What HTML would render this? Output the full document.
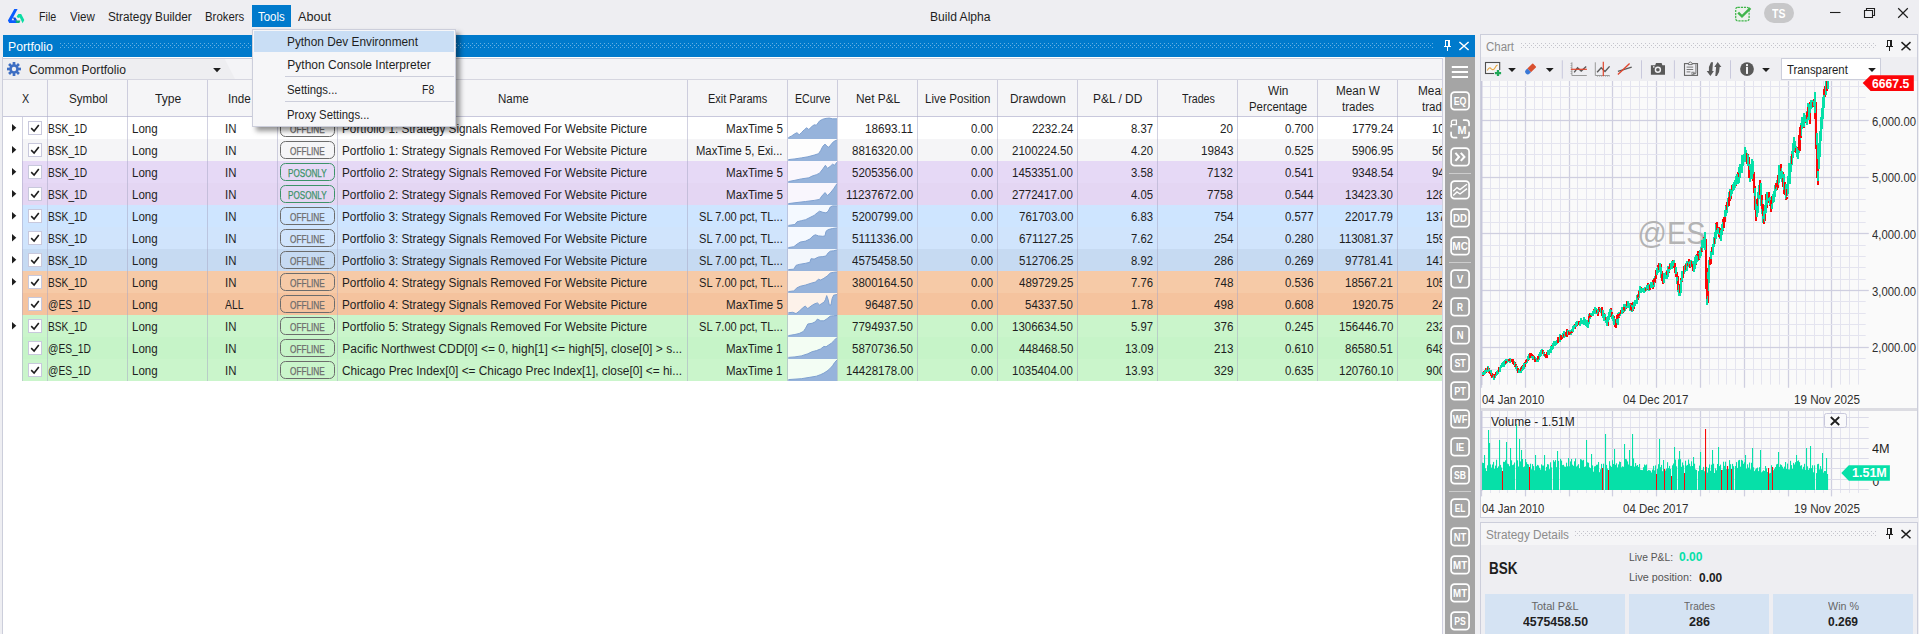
<!DOCTYPE html><html><head><meta charset="utf-8"><title>Build Alpha</title><style>*{box-sizing:border-box;margin:0;padding:0}
html,body{width:1919px;height:634px;overflow:hidden}
body{background:#EEEEF2;font-family:"Liberation Sans",sans-serif;font-size:12px;color:#1E1E1E;position:relative}
.a{position:absolute}
.t{position:absolute;white-space:nowrap;line-height:14px;height:14px;transform-origin:0 50%}
.c{text-align:center}
.r{text-align:right}
.menu{position:absolute;top:10px;height:14px;line-height:14px;white-space:nowrap}
.hdr{position:absolute;white-space:nowrap;line-height:16px;text-align:center;color:#1E1E1E}
.row{position:absolute;left:22px;width:1421px;height:22px;overflow:hidden}
.cell{position:absolute;top:5px;height:14px;line-height:14px;white-space:nowrap;overflow:hidden}
.num{letter-spacing:-0.25px}
.nm{letter-spacing:-0.1px}
.vsep{position:absolute;width:1px;background:rgba(165,165,195,0.5)}
.badge{position:absolute;width:55px;height:17.4px;border:1.2px solid #6A6A6A;border-radius:5.5px}

.cb{position:absolute;width:14px;height:14px;background:#fff;border:1px solid #C8C8DC}
</style></head><body>
<svg class="a" style="left:0;top:0" width="34" height="34" viewBox="0 0 34 34">
<path d="M14.3 9 L17.6 9 L11.6 20.3 L16.4 20.3 L17.6 23 L9.2 23 L7.9 20.6 Z" fill="#0A5CFF"/>
<path d="M12.8 17.4 L15.4 17.4 L17.2 20.6 L14.4 20.6 Z" fill="#0B4CD8"/>
<path d="M16.6 16.4 L18.4 13.9 L21.2 13.9 L24.3 20 L22.6 23.2 L19.8 17.4 L18 17.9 Z" fill="#0BDCA4"/>
<path d="M15.2 20.4 L20.4 20.4 L19.4 23 L16.4 23 Z" fill="#0BAE7C"/>
</svg>
<div class="a" style="left:252px;top:5px;width:39px;height:22px;background:#007ACC"></div>
<div class="t" style="left:39.40px;top:10px;transform:scaleX(0.8892);">File</div>
<div class="t" style="left:70.00px;top:10px;transform:scaleX(0.9652);">View</div>
<div class="t" style="left:108.30px;top:10px;transform:scaleX(0.9802);">Strategy Builder</div>
<div class="t" style="left:205.00px;top:10px;transform:scaleX(0.9506);">Brokers</div>
<div class="t" style="left:258.20px;top:10px;color:#fff;transform:scaleX(0.9530);">Tools</div>
<div class="t" style="left:297.70px;top:10px;transform:scaleX(1.0523);">About</div>
<div class="t" style="left:929.75px;top:10px;transform:scaleX(1.0075);">Build Alpha</div>
<svg class="a" style="left:1730px;top:2px" width="26" height="24" viewBox="0 0 26 24">
<rect x="5.7" y="5.4" width="13.4" height="13.4" rx="2" fill="#ECF1EC" stroke="#3FB54A" stroke-width="1.2" stroke-dasharray="2.2 0.9"/>
<path d="M8.2 10.6 L12 14.4 L20.4 6.2" fill="none" stroke="#3FB54A" stroke-width="2.4"/>
</svg>
<div class="a" style="left:1764px;top:3px;width:30px;height:20px;border-radius:10px;background:#C7C7C9"></div>
<div class="t" style="left:1772.00px;top:5.8px;font-size:13.5px;font-weight:bold;color:#fff;transform:scaleX(0.7761);line-height:16px;height:16px;">TS</div>
<svg class="a" style="left:1820px;top:0" width="99" height="30" viewBox="0 0 99 30">
<path d="M10 12.5 H20.5" stroke="#1E1E1E" stroke-width="1.1" fill="none"/>
<path d="M44.5 10.5 H52.5 V17.5 H44.5 Z M46.5 10.5 V8.5 H54.5 V15.5 H52.5" stroke="#1E1E1E" stroke-width="1.1" fill="none"/>
<path d="M78.2 8.3 L87.8 17.7 M87.8 8.3 L78.2 17.7" stroke="#1E1E1E" stroke-width="1.2" fill="none"/>
</svg>
<div class="a" style="left:2px;top:57px;width:1441px;height:577px;background:#fff;border-left:1px solid #CCCEDB"></div>
<div class="a" style="left:3px;top:35px;width:1472px;height:22px;background:#007ACC"></div>
<div class="t" style="left:7.70px;top:40px;color:#fff;transform:scaleX(1.0175);">Portfolio</div>
<svg class="a" style="left:60px;top:43px" width="1374" height="5"><defs><pattern id="dp" width="4" height="4" patternUnits="userSpaceOnUse"><rect x="0" y="0" width="1" height="1" fill="#68B1E3"/><rect x="2" y="2" width="1" height="1" fill="#68B1E3"/></pattern></defs><rect width="1374" height="5" fill="url(#dp)"/></svg>
<svg class="a" style="left:1440px;top:37px" width="34" height="18" viewBox="0 0 34 18">
<path d="M5 3.5 H10 M5.5 3 V9.5 M4 9.5 H11 M7.5 10 V14" stroke="#fff" stroke-width="1" fill="none"/><rect x="8" y="3" width="2" height="6.5" fill="#fff"/>
<path d="M19.4 5 L28.6 13 M28.6 5 L19.4 13" stroke="#fff" stroke-width="1.5" fill="none"/></svg>
<div class="a" style="left:3px;top:58px;width:1439px;height:22px;background:#F4F4F7;border-top:1px solid #CCCEDB"></div>
<svg class="a" style="left:3px;top:59px" width="240" height="21"><path d="M0 0 H221.7 L232 20 H0Z" fill="#EEEEF1"/></svg>
<svg class="a" style="left:6px;top:61px" width="16" height="16" viewBox="-8 -8 16 16"><g fill="#3F6FC3"><circle r="4.7"/><rect x="-1.35" y="-7" width="2.7" height="4" transform="rotate(0)"/><rect x="-1.35" y="-7" width="2.7" height="4" transform="rotate(45)"/><rect x="-1.35" y="-7" width="2.7" height="4" transform="rotate(90)"/><rect x="-1.35" y="-7" width="2.7" height="4" transform="rotate(135)"/><rect x="-1.35" y="-7" width="2.7" height="4" transform="rotate(180)"/><rect x="-1.35" y="-7" width="2.7" height="4" transform="rotate(225)"/><rect x="-1.35" y="-7" width="2.7" height="4" transform="rotate(270)"/><rect x="-1.35" y="-7" width="2.7" height="4" transform="rotate(315)"/></g><circle r="2.2" fill="#EEEEF1"/></svg>
<div class="t" style="left:29.30px;top:63px;transform:scaleX(1.0099);">Common Portfolio</div>
<svg class="a" style="left:212px;top:67px" width="10" height="6"><path d="M1.1 1 H8.9 L5 5.2Z" fill="#1E1E1E"/></svg>
<div class="a" style="left:3px;top:79px;width:1439px;height:38px;background:#F5F5F7;border-top:1px solid #D6D6E0;border-bottom:1px solid #C8C8DC"></div>
<div class="a" style="left:3px;top:80px;width:1439px;height:36px;overflow:hidden">
<div class="t" style="left:18.90px;top:11.5px;transform:scaleX(0.8982);">X</div>
<div class="t" style="left:65.65px;top:11.5px;transform:scaleX(0.9671);">Symbol</div>
<div class="t" style="left:151.85px;top:11.5px;transform:scaleX(1.0109);">Type</div>
<div class="t" style="left:225.20px;top:11.5px;transform:scaleX(0.9718);">Inde</div>
<div class="t" style="left:494.60px;top:11.5px;transform:scaleX(0.9620);">Name</div>
<div class="t" style="left:705.40px;top:11.5px;transform:scaleX(0.9152);">Exit Params</div>
<div class="t" style="left:792.25px;top:11.5px;transform:scaleX(0.8872);">ECurve</div>
<div class="t" style="left:852.90px;top:11.5px;transform:scaleX(0.9887);">Net P&amp;L</div>
<div class="t" style="left:922.30px;top:11.5px;transform:scaleX(0.9611);">Live Position</div>
<div class="t" style="left:1007.05px;top:11.5px;transform:scaleX(0.9858);">Drawdown</div>
<div class="t" style="left:1090.35px;top:11.5px;transform:scaleX(0.9944);">P&amp;L / DD</div>
<div class="t" style="left:1178.55px;top:11.5px;transform:scaleX(0.8914);">Trades</div>
<div class="t" style="left:1264.80px;top:3.5px;transform:scaleX(0.9868);">Win</div>
<div class="t" style="left:1245.90px;top:20px;transform:scaleX(0.9480);">Percentage</div>
<div class="t" style="left:1333.10px;top:3.5px;transform:scaleX(0.9801);">Mean W</div>
<div class="t" style="left:1338.95px;top:20px;transform:scaleX(0.9622);">trades</div>
<div class="t" style="left:1415.25px;top:3.5px;transform:scaleX(0.9867);">Mean L</div>
<div class="t" style="left:1418.95px;top:20px;transform:scaleX(0.9622);">trades</div>
</div>
<div class="a" style="left:22px;top:117px;width:1420px;height:22px;background:#FFFFFF"></div>
<div class="cb" style="left:28px;top:121px"><svg width="12" height="12" viewBox="0 0 12 12" style="display:block"><path d="M2.2 6.2 L5.1 9 L9.8 3" fill="none" stroke="#1E1E1E" stroke-width="1.6"/></svg></div>
<div class="t" style="left:48.30px;top:122px;transform:scaleX(0.8494);">BSK_1D</div>
<div class="t" style="left:132.30px;top:122px;transform:scaleX(0.9624);">Long</div>
<div class="t" style="left:225.30px;top:122px;transform:scaleX(0.9500);">IN</div>
<div class="badge" style="left:280px;top:119.2px;border-color:#6C6C6C"></div>
<div class="t" style="left:290.20px;top:123.5px;font-size:10px;color:#6C6C6C;transform:scaleX(0.8240);line-height:12px;height:12px;-webkit-text-stroke:0.25px #6C6C6C;">OFFLINE</div>
<div class="t" style="left:342.30px;top:122px;transform:scaleX(0.9799);">Portfolio 1: Strategy Signals Removed For Website Picture</div>
<div class="t" style="left:725.50px;top:122px;transform:scaleX(0.9676);">MaxTime 5</div>
<svg class="a" style="left:788px;top:117px" width="49" height="22"><rect width="49" height="22" fill="#fff" fill-opacity="0.78"/><path d="M0.4 20.6 L3.7 18.9 L6.9 16.7 L9.0 15.7 L11.2 17.8 L13.3 15.7 L16.5 12.5 L18.7 10.8 L20.8 12.5 L24.1 9.3 L26.2 7.8 L28.4 8.2 L31.6 3.9 L34.8 2.2 L38.0 1.4 L41.3 1.1 L44.5 1.8 L49.0 1.8 L49 22 L0 22Z" fill="#96B3DB"/><path d="M0.4 20.6 L3.7 18.9 L6.9 16.7 L9.0 15.7 L11.2 17.8 L13.3 15.7 L16.5 12.5 L18.7 10.8 L20.8 12.5 L24.1 9.3 L26.2 7.8 L28.4 8.2 L31.6 3.9 L34.8 2.2 L38.0 1.4 L41.3 1.1 L44.5 1.8 L49.0 1.8" fill="none" stroke="#7FA1D0" stroke-width="1"/></svg>
<div class="t" style="left:865.11px;top:122px;transform:scaleX(0.9739);">18693.11</div>
<div class="t" style="left:970.99px;top:122px;transform:scaleX(0.9422);">0.00</div>
<div class="t" style="left:1031.58px;top:122px;transform:scaleX(0.9546);">2232.24</div>
<div class="t" style="left:1130.99px;top:122px;transform:scaleX(0.9422);">8.37</div>
<div class="t" style="left:1220.06px;top:122px;transform:scaleX(0.9686);">20</div>
<div class="t" style="left:1284.52px;top:122px;transform:scaleX(0.9483);">0.700</div>
<div class="t" style="left:1351.58px;top:122px;transform:scaleX(0.9546);">1779.24</div>
<div class="a" style="left:1398px;top:117px;width:44px;height:22px;overflow:hidden"><div class="t" style="left:34.18px;top:5px;transform:scaleX(0.9546);">1062.18</div></div>
<svg class="a" style="left:11.8px;top:124.2px" width="5" height="8"><path d="M0 0 L4.3 3.8 L0 7.6Z" fill="#1E1E1E"/></svg>
<div class="a" style="left:22px;top:139px;width:1420px;height:22px;background:#F5F5F7"></div>
<div class="cb" style="left:28px;top:143px"><svg width="12" height="12" viewBox="0 0 12 12" style="display:block"><path d="M2.2 6.2 L5.1 9 L9.8 3" fill="none" stroke="#1E1E1E" stroke-width="1.6"/></svg></div>
<div class="t" style="left:48.30px;top:144px;transform:scaleX(0.8494);">BSK_1D</div>
<div class="t" style="left:132.30px;top:144px;transform:scaleX(0.9624);">Long</div>
<div class="t" style="left:225.30px;top:144px;transform:scaleX(0.9500);">IN</div>
<div class="badge" style="left:280px;top:141.2px;border-color:#6C6C6C"></div>
<div class="t" style="left:290.20px;top:145.5px;font-size:10px;color:#6C6C6C;transform:scaleX(0.8240);line-height:12px;height:12px;-webkit-text-stroke:0.25px #6C6C6C;">OFFLINE</div>
<div class="t" style="left:342.30px;top:144px;transform:scaleX(0.9799);">Portfolio 1: Strategy Signals Removed For Website Picture</div>
<div class="t" style="left:696.00px;top:144px;transform:scaleX(0.9377);">MaxTime 5, Exi...</div>
<svg class="a" style="left:788px;top:139px" width="49" height="22"><rect width="49" height="22" fill="#fff" fill-opacity="0.78"/><path d="M0.4 20.6 L6.9 19.9 L13.3 18.9 L19.8 17.8 L26.2 16.1 L30.5 14.7 L32.7 11.5 L34.8 7.3 L37.0 5.1 L39.1 7.3 L40.8 8.3 L43.4 5.1 L45.6 2.6 L49.0 0.9 L49 22 L0 22Z" fill="#96B3DB"/><path d="M0.4 20.6 L6.9 19.9 L13.3 18.9 L19.8 17.8 L26.2 16.1 L30.5 14.7 L32.7 11.5 L34.8 7.3 L37.0 5.1 L39.1 7.3 L40.8 8.3 L43.4 5.1 L45.6 2.6 L49.0 0.9" fill="none" stroke="#7FA1D0" stroke-width="1"/></svg>
<div class="t" style="left:852.17px;top:144px;transform:scaleX(0.9594);">8816320.00</div>
<div class="t" style="left:970.99px;top:144px;transform:scaleX(0.9422);">0.00</div>
<div class="t" style="left:1012.17px;top:144px;transform:scaleX(0.9594);">2100224.50</div>
<div class="t" style="left:1130.99px;top:144px;transform:scaleX(0.9422);">4.20</div>
<div class="t" style="left:1200.65px;top:144px;transform:scaleX(0.9693);">19843</div>
<div class="t" style="left:1284.52px;top:144px;transform:scaleX(0.9483);">0.525</div>
<div class="t" style="left:1351.58px;top:144px;transform:scaleX(0.9546);">5906.95</div>
<div class="a" style="left:1398px;top:139px;width:44px;height:22px;overflow:hidden"><div class="t" style="left:34.18px;top:5px;transform:scaleX(0.9546);">5612.44</div></div>
<svg class="a" style="left:11.8px;top:146.2px" width="5" height="8"><path d="M0 0 L4.3 3.8 L0 7.6Z" fill="#1E1E1E"/></svg>
<div class="a" style="left:22px;top:161px;width:1420px;height:22px;background:#E6D9F6"></div>
<div class="cb" style="left:28px;top:165px"><svg width="12" height="12" viewBox="0 0 12 12" style="display:block"><path d="M2.2 6.2 L5.1 9 L9.8 3" fill="none" stroke="#1E1E1E" stroke-width="1.6"/></svg></div>
<div class="t" style="left:48.30px;top:166px;transform:scaleX(0.8494);">BSK_1D</div>
<div class="t" style="left:132.30px;top:166px;transform:scaleX(0.9624);">Long</div>
<div class="t" style="left:225.30px;top:166px;transform:scaleX(0.9500);">IN</div>
<div class="badge" style="left:280px;top:163.2px;border-color:#3D9369"></div>
<div class="t" style="left:288.25px;top:167.5px;font-size:10px;color:#3D9369;transform:scaleX(0.8129);line-height:12px;height:12px;-webkit-text-stroke:0.25px #3D9369;">POSONLY</div>
<div class="t" style="left:342.30px;top:166px;transform:scaleX(0.9799);">Portfolio 2: Strategy Signals Removed For Website Picture</div>
<div class="t" style="left:725.50px;top:166px;transform:scaleX(0.9676);">MaxTime 5</div>
<svg class="a" style="left:788px;top:161px" width="49" height="22"><rect width="49" height="22" fill="#fff" fill-opacity="0.78"/><path d="M0.4 20.6 L6.9 19.3 L13.3 17.9 L20.8 16.8 L24.1 15.1 L28.4 13.7 L31.6 12.2 L34.8 8.0 L37.4 4.3 L39.5 7.4 L42.3 5.3 L44.5 3.2 L46.6 4.3 L49.0 1.1 L49 22 L0 22Z" fill="#96B3DB"/><path d="M0.4 20.6 L6.9 19.3 L13.3 17.9 L20.8 16.8 L24.1 15.1 L28.4 13.7 L31.6 12.2 L34.8 8.0 L37.4 4.3 L39.5 7.4 L42.3 5.3 L44.5 3.2 L46.6 4.3 L49.0 1.1" fill="none" stroke="#7FA1D0" stroke-width="1"/></svg>
<div class="t" style="left:852.17px;top:166px;transform:scaleX(0.9594);">5205356.00</div>
<div class="t" style="left:970.99px;top:166px;transform:scaleX(0.9422);">0.00</div>
<div class="t" style="left:1012.17px;top:166px;transform:scaleX(0.9594);">1453351.00</div>
<div class="t" style="left:1130.99px;top:166px;transform:scaleX(0.9422);">3.58</div>
<div class="t" style="left:1207.12px;top:166px;transform:scaleX(0.9692);">7132</div>
<div class="t" style="left:1284.52px;top:166px;transform:scaleX(0.9483);">0.541</div>
<div class="t" style="left:1351.58px;top:166px;transform:scaleX(0.9546);">9348.54</div>
<div class="a" style="left:1398px;top:161px;width:44px;height:22px;overflow:hidden"><div class="t" style="left:34.18px;top:5px;transform:scaleX(0.9546);">9421.37</div></div>
<svg class="a" style="left:11.8px;top:168.2px" width="5" height="8"><path d="M0 0 L4.3 3.8 L0 7.6Z" fill="#1E1E1E"/></svg>
<div class="a" style="left:22px;top:183px;width:1420px;height:22px;background:#E4D6F3"></div>
<div class="cb" style="left:28px;top:187px"><svg width="12" height="12" viewBox="0 0 12 12" style="display:block"><path d="M2.2 6.2 L5.1 9 L9.8 3" fill="none" stroke="#1E1E1E" stroke-width="1.6"/></svg></div>
<div class="t" style="left:48.30px;top:188px;transform:scaleX(0.8494);">BSK_1D</div>
<div class="t" style="left:132.30px;top:188px;transform:scaleX(0.9624);">Long</div>
<div class="t" style="left:225.30px;top:188px;transform:scaleX(0.9500);">IN</div>
<div class="badge" style="left:280px;top:185.2px;border-color:#3D9369"></div>
<div class="t" style="left:288.25px;top:189.5px;font-size:10px;color:#3D9369;transform:scaleX(0.8129);line-height:12px;height:12px;-webkit-text-stroke:0.25px #3D9369;">POSONLY</div>
<div class="t" style="left:342.30px;top:188px;transform:scaleX(0.9799);">Portfolio 2: Strategy Signals Removed For Website Picture</div>
<div class="t" style="left:725.50px;top:188px;transform:scaleX(0.9676);">MaxTime 5</div>
<svg class="a" style="left:788px;top:183px" width="49" height="22"><rect width="49" height="22" fill="#fff" fill-opacity="0.78"/><path d="M0.4 20.6 L9.0 19.5 L17.6 18.5 L26.2 17.4 L31.6 16.4 L33.7 13.2 L37.0 9.6 L39.5 12.5 L42.3 10.0 L45.6 5.8 L47.7 2.6 L49.0 0.5 L49 22 L0 22Z" fill="#96B3DB"/><path d="M0.4 20.6 L9.0 19.5 L17.6 18.5 L26.2 17.4 L31.6 16.4 L33.7 13.2 L37.0 9.6 L39.5 12.5 L42.3 10.0 L45.6 5.8 L47.7 2.6 L49.0 0.5" fill="none" stroke="#7FA1D0" stroke-width="1"/></svg>
<div class="t" style="left:845.70px;top:188px;transform:scaleX(0.9727);">11237672.00</div>
<div class="t" style="left:970.99px;top:188px;transform:scaleX(0.9422);">0.00</div>
<div class="t" style="left:1012.17px;top:188px;transform:scaleX(0.9594);">2772417.00</div>
<div class="t" style="left:1130.99px;top:188px;transform:scaleX(0.9422);">4.05</div>
<div class="t" style="left:1207.12px;top:188px;transform:scaleX(0.9692);">7758</div>
<div class="t" style="left:1284.52px;top:188px;transform:scaleX(0.9483);">0.544</div>
<div class="t" style="left:1345.11px;top:188px;transform:scaleX(0.9566);">13423.30</div>
<div class="a" style="left:1398px;top:183px;width:44px;height:22px;overflow:hidden"><div class="t" style="left:27.71px;top:5px;transform:scaleX(0.9566);">12874.50</div></div>
<svg class="a" style="left:11.8px;top:190.2px" width="5" height="8"><path d="M0 0 L4.3 3.8 L0 7.6Z" fill="#1E1E1E"/></svg>
<div class="a" style="left:22px;top:205px;width:1420px;height:22px;background:#CEE5FF"></div>
<div class="cb" style="left:28px;top:209px"><svg width="12" height="12" viewBox="0 0 12 12" style="display:block"><path d="M2.2 6.2 L5.1 9 L9.8 3" fill="none" stroke="#1E1E1E" stroke-width="1.6"/></svg></div>
<div class="t" style="left:48.30px;top:210px;transform:scaleX(0.8494);">BSK_1D</div>
<div class="t" style="left:132.30px;top:210px;transform:scaleX(0.9624);">Long</div>
<div class="t" style="left:225.30px;top:210px;transform:scaleX(0.9500);">IN</div>
<div class="badge" style="left:280px;top:207.2px;border-color:#6C6C6C"></div>
<div class="t" style="left:290.20px;top:211.5px;font-size:10px;color:#6C6C6C;transform:scaleX(0.8240);line-height:12px;height:12px;-webkit-text-stroke:0.25px #6C6C6C;">OFFLINE</div>
<div class="t" style="left:342.30px;top:210px;transform:scaleX(0.9799);">Portfolio 3: Strategy Signals Removed For Website Picture</div>
<div class="t" style="left:698.75px;top:210px;transform:scaleX(0.9230);">SL 7.00 pct, TL...</div>
<svg class="a" style="left:788px;top:205px" width="49" height="22"><rect width="49" height="22" fill="#fff" fill-opacity="0.78"/><path d="M0.4 20.4 L6.9 19.5 L9.0 16.8 L13.3 15.7 L17.6 14.7 L21.9 12.5 L26.2 10.4 L29.4 7.7 L31.6 6.2 L34.8 7.3 L38.0 7.9 L40.2 6.2 L42.3 2.0 L44.5 0.9 L49.0 0.9 L49 22 L0 22Z" fill="#96B3DB"/><path d="M0.4 20.4 L6.9 19.5 L9.0 16.8 L13.3 15.7 L17.6 14.7 L21.9 12.5 L26.2 10.4 L29.4 7.7 L31.6 6.2 L34.8 7.3 L38.0 7.9 L40.2 6.2 L42.3 2.0 L44.5 0.9 L49.0 0.9" fill="none" stroke="#7FA1D0" stroke-width="1"/></svg>
<div class="t" style="left:852.17px;top:210px;transform:scaleX(0.9594);">5200799.00</div>
<div class="t" style="left:970.99px;top:210px;transform:scaleX(0.9422);">0.00</div>
<div class="t" style="left:1018.64px;top:210px;transform:scaleX(0.9581);">761703.00</div>
<div class="t" style="left:1130.99px;top:210px;transform:scaleX(0.9422);">6.83</div>
<div class="t" style="left:1213.59px;top:210px;transform:scaleX(0.9690);">754</div>
<div class="t" style="left:1284.52px;top:210px;transform:scaleX(0.9483);">0.577</div>
<div class="t" style="left:1345.11px;top:210px;transform:scaleX(0.9566);">22017.79</div>
<div class="a" style="left:1398px;top:205px;width:44px;height:22px;overflow:hidden"><div class="t" style="left:27.71px;top:5px;transform:scaleX(0.9566);">13790.12</div></div>
<svg class="a" style="left:11.8px;top:212.2px" width="5" height="8"><path d="M0 0 L4.3 3.8 L0 7.6Z" fill="#1E1E1E"/></svg>
<div class="a" style="left:22px;top:227px;width:1420px;height:22px;background:#D0E4FC"></div>
<div class="cb" style="left:28px;top:231px"><svg width="12" height="12" viewBox="0 0 12 12" style="display:block"><path d="M2.2 6.2 L5.1 9 L9.8 3" fill="none" stroke="#1E1E1E" stroke-width="1.6"/></svg></div>
<div class="t" style="left:48.30px;top:232px;transform:scaleX(0.8494);">BSK_1D</div>
<div class="t" style="left:132.30px;top:232px;transform:scaleX(0.9624);">Long</div>
<div class="t" style="left:225.30px;top:232px;transform:scaleX(0.9500);">IN</div>
<div class="badge" style="left:280px;top:229.2px;border-color:#6C6C6C"></div>
<div class="t" style="left:290.20px;top:233.5px;font-size:10px;color:#6C6C6C;transform:scaleX(0.8240);line-height:12px;height:12px;-webkit-text-stroke:0.25px #6C6C6C;">OFFLINE</div>
<div class="t" style="left:342.30px;top:232px;transform:scaleX(0.9799);">Portfolio 3: Strategy Signals Removed For Website Picture</div>
<div class="t" style="left:698.75px;top:232px;transform:scaleX(0.9230);">SL 7.00 pct, TL...</div>
<svg class="a" style="left:788px;top:227px" width="49" height="22"><rect width="49" height="22" fill="#fff" fill-opacity="0.78"/><path d="M0.4 20.6 L5.8 19.7 L9.0 17.2 L12.2 15.1 L17.6 14.1 L21.9 12.0 L25.1 8.9 L27.3 7.8 L30.5 8.9 L34.8 9.3 L37.0 8.9 L38.0 4.3 L40.2 2.6 L44.5 1.5 L49.0 0.9 L49 22 L0 22Z" fill="#96B3DB"/><path d="M0.4 20.6 L5.8 19.7 L9.0 17.2 L12.2 15.1 L17.6 14.1 L21.9 12.0 L25.1 8.9 L27.3 7.8 L30.5 8.9 L34.8 9.3 L37.0 8.9 L38.0 4.3 L40.2 2.6 L44.5 1.5 L49.0 0.9" fill="none" stroke="#7FA1D0" stroke-width="1"/></svg>
<div class="t" style="left:852.17px;top:232px;transform:scaleX(0.9871);">5111336.00</div>
<div class="t" style="left:970.99px;top:232px;transform:scaleX(0.9422);">0.00</div>
<div class="t" style="left:1018.64px;top:232px;transform:scaleX(0.9734);">671127.25</div>
<div class="t" style="left:1130.99px;top:232px;transform:scaleX(0.9422);">7.62</div>
<div class="t" style="left:1213.59px;top:232px;transform:scaleX(0.9690);">254</div>
<div class="t" style="left:1284.52px;top:232px;transform:scaleX(0.9483);">0.280</div>
<div class="t" style="left:1338.64px;top:232px;transform:scaleX(0.9734);">113081.37</div>
<div class="a" style="left:1398px;top:227px;width:44px;height:22px;overflow:hidden"><div class="t" style="left:27.71px;top:5px;transform:scaleX(0.9566);">15987.33</div></div>
<svg class="a" style="left:11.8px;top:234.2px" width="5" height="8"><path d="M0 0 L4.3 3.8 L0 7.6Z" fill="#1E1E1E"/></svg>
<div class="a" style="left:22px;top:249px;width:1420px;height:22px;background:#C6DAF2"></div>
<div class="cb" style="left:28px;top:253px"><svg width="12" height="12" viewBox="0 0 12 12" style="display:block"><path d="M2.2 6.2 L5.1 9 L9.8 3" fill="none" stroke="#1E1E1E" stroke-width="1.6"/></svg></div>
<div class="t" style="left:48.30px;top:254px;transform:scaleX(0.8494);">BSK_1D</div>
<div class="t" style="left:132.30px;top:254px;transform:scaleX(0.9624);">Long</div>
<div class="t" style="left:225.30px;top:254px;transform:scaleX(0.9500);">IN</div>
<div class="badge" style="left:280px;top:251.2px;border-color:#6C6C6C"></div>
<div class="t" style="left:290.20px;top:255.5px;font-size:10px;color:#6C6C6C;transform:scaleX(0.8240);line-height:12px;height:12px;-webkit-text-stroke:0.25px #6C6C6C;">OFFLINE</div>
<div class="t" style="left:342.30px;top:254px;transform:scaleX(0.9799);">Portfolio 3: Strategy Signals Removed For Website Picture</div>
<div class="t" style="left:698.75px;top:254px;transform:scaleX(0.9230);">SL 7.00 pct, TL...</div>
<svg class="a" style="left:788px;top:249px" width="49" height="22"><rect width="49" height="22" fill="#fff" fill-opacity="0.78"/><path d="M0.4 20.6 L5.8 20.2 L8.0 16.4 L11.2 15.4 L17.6 14.3 L21.9 13.3 L23.0 9.7 L26.2 10.1 L30.5 8.0 L34.8 7.6 L38.0 7.0 L40.2 3.8 L42.3 2.2 L45.6 1.8 L49.0 0.9 L49 22 L0 22Z" fill="#96B3DB"/><path d="M0.4 20.6 L5.8 20.2 L8.0 16.4 L11.2 15.4 L17.6 14.3 L21.9 13.3 L23.0 9.7 L26.2 10.1 L30.5 8.0 L34.8 7.6 L38.0 7.0 L40.2 3.8 L42.3 2.2 L45.6 1.8 L49.0 0.9" fill="none" stroke="#7FA1D0" stroke-width="1"/></svg>
<div class="t" style="left:852.17px;top:254px;transform:scaleX(0.9594);">4575458.50</div>
<div class="t" style="left:970.99px;top:254px;transform:scaleX(0.9422);">0.00</div>
<div class="t" style="left:1018.64px;top:254px;transform:scaleX(0.9581);">512706.25</div>
<div class="t" style="left:1130.99px;top:254px;transform:scaleX(0.9422);">8.92</div>
<div class="t" style="left:1213.59px;top:254px;transform:scaleX(0.9690);">286</div>
<div class="t" style="left:1284.52px;top:254px;transform:scaleX(0.9483);">0.269</div>
<div class="t" style="left:1345.11px;top:254px;transform:scaleX(0.9566);">97781.41</div>
<div class="a" style="left:1398px;top:249px;width:44px;height:22px;overflow:hidden"><div class="t" style="left:27.71px;top:5px;transform:scaleX(0.9566);">14120.80</div></div>
<svg class="a" style="left:11.8px;top:256.2px" width="5" height="8"><path d="M0 0 L4.3 3.8 L0 7.6Z" fill="#1E1E1E"/></svg>
<div class="a" style="left:22px;top:271px;width:1420px;height:22px;background:#F6CAA7"></div>
<div class="cb" style="left:28px;top:275px"><svg width="12" height="12" viewBox="0 0 12 12" style="display:block"><path d="M2.2 6.2 L5.1 9 L9.8 3" fill="none" stroke="#1E1E1E" stroke-width="1.6"/></svg></div>
<div class="t" style="left:48.30px;top:276px;transform:scaleX(0.8494);">BSK_1D</div>
<div class="t" style="left:132.30px;top:276px;transform:scaleX(0.9624);">Long</div>
<div class="t" style="left:225.30px;top:276px;transform:scaleX(0.9500);">IN</div>
<div class="badge" style="left:280px;top:273.2px;border-color:#6C6C6C"></div>
<div class="t" style="left:290.20px;top:277.5px;font-size:10px;color:#6C6C6C;transform:scaleX(0.8240);line-height:12px;height:12px;-webkit-text-stroke:0.25px #6C6C6C;">OFFLINE</div>
<div class="t" style="left:342.30px;top:276px;transform:scaleX(0.9799);">Portfolio 4: Strategy Signals Removed For Website Picture</div>
<div class="t" style="left:698.75px;top:276px;transform:scaleX(0.9230);">SL 7.00 pct, TL...</div>
<svg class="a" style="left:788px;top:271px" width="49" height="22"><rect width="49" height="22" fill="#fff" fill-opacity="0.78"/><path d="M0.4 20.6 L5.8 19.9 L9.0 16.8 L12.2 15.3 L17.6 14.0 L24.1 11.9 L27.3 11.1 L30.5 8.3 L32.7 9.0 L35.9 7.3 L39.1 5.1 L42.3 2.0 L45.6 1.3 L49.0 0.9 L49 22 L0 22Z" fill="#96B3DB"/><path d="M0.4 20.6 L5.8 19.9 L9.0 16.8 L12.2 15.3 L17.6 14.0 L24.1 11.9 L27.3 11.1 L30.5 8.3 L32.7 9.0 L35.9 7.3 L39.1 5.1 L42.3 2.0 L45.6 1.3 L49.0 0.9" fill="none" stroke="#7FA1D0" stroke-width="1"/></svg>
<div class="t" style="left:852.17px;top:276px;transform:scaleX(0.9594);">3800164.50</div>
<div class="t" style="left:970.99px;top:276px;transform:scaleX(0.9422);">0.00</div>
<div class="t" style="left:1018.64px;top:276px;transform:scaleX(0.9581);">489729.25</div>
<div class="t" style="left:1130.99px;top:276px;transform:scaleX(0.9422);">7.76</div>
<div class="t" style="left:1213.59px;top:276px;transform:scaleX(0.9690);">748</div>
<div class="t" style="left:1284.52px;top:276px;transform:scaleX(0.9483);">0.536</div>
<div class="t" style="left:1345.11px;top:276px;transform:scaleX(0.9566);">18567.21</div>
<div class="a" style="left:1398px;top:271px;width:44px;height:22px;overflow:hidden"><div class="t" style="left:27.71px;top:5px;transform:scaleX(0.9566);">10563.91</div></div>
<svg class="a" style="left:11.8px;top:278.2px" width="5" height="8"><path d="M0 0 L4.3 3.8 L0 7.6Z" fill="#1E1E1E"/></svg>
<div class="a" style="left:22px;top:293px;width:1420px;height:22px;background:#F5C39E"></div>
<div class="cb" style="left:28px;top:297px"><svg width="12" height="12" viewBox="0 0 12 12" style="display:block"><path d="M2.2 6.2 L5.1 9 L9.8 3" fill="none" stroke="#1E1E1E" stroke-width="1.6"/></svg></div>
<div class="t" style="left:48.30px;top:298px;transform:scaleX(0.8545);">@ES_1D</div>
<div class="t" style="left:132.30px;top:298px;transform:scaleX(0.9624);">Long</div>
<div class="t" style="left:225.30px;top:298px;transform:scaleX(0.8614);">ALL</div>
<div class="badge" style="left:280px;top:295.2px;border-color:#6C6C6C"></div>
<div class="t" style="left:290.20px;top:299.5px;font-size:10px;color:#6C6C6C;transform:scaleX(0.8240);line-height:12px;height:12px;-webkit-text-stroke:0.25px #6C6C6C;">OFFLINE</div>
<div class="t" style="left:342.30px;top:298px;transform:scaleX(0.9799);">Portfolio 4: Strategy Signals Removed For Website Picture</div>
<div class="t" style="left:725.50px;top:298px;transform:scaleX(0.9676);">MaxTime 5</div>
<svg class="a" style="left:788px;top:293px" width="49" height="22"><rect width="49" height="22" fill="#fff" fill-opacity="0.78"/><path d="M0.4 19.7 L4.7 19.3 L8.0 20.6 L11.2 18.3 L14.4 15.1 L17.2 13.1 L19.8 15.6 L23.0 13.1 L26.2 11.0 L29.4 9.9 L31.6 12.0 L33.7 10.5 L35.9 9.3 L37.4 6.8 L38.7 2.6 L40.2 6.8 L41.3 12.0 L43.0 12.0 L44.1 5.7 L45.6 2.2 L49.0 1.5 L49 22 L0 22Z" fill="#96B3DB"/><path d="M0.4 19.7 L4.7 19.3 L8.0 20.6 L11.2 18.3 L14.4 15.1 L17.2 13.1 L19.8 15.6 L23.0 13.1 L26.2 11.0 L29.4 9.9 L31.6 12.0 L33.7 10.5 L35.9 9.3 L37.4 6.8 L38.7 2.6 L40.2 6.8 L41.3 12.0 L43.0 12.0 L44.1 5.7 L45.6 2.2 L49.0 1.5" fill="none" stroke="#7FA1D0" stroke-width="1"/></svg>
<div class="t" style="left:865.11px;top:298px;transform:scaleX(0.9566);">96487.50</div>
<div class="t" style="left:970.99px;top:298px;transform:scaleX(0.9422);">0.00</div>
<div class="t" style="left:1025.11px;top:298px;transform:scaleX(0.9566);">54337.50</div>
<div class="t" style="left:1130.99px;top:298px;transform:scaleX(0.9422);">1.78</div>
<div class="t" style="left:1213.59px;top:298px;transform:scaleX(0.9690);">498</div>
<div class="t" style="left:1284.52px;top:298px;transform:scaleX(0.9483);">0.608</div>
<div class="t" style="left:1351.58px;top:298px;transform:scaleX(0.9546);">1920.75</div>
<div class="a" style="left:1398px;top:293px;width:44px;height:22px;overflow:hidden"><div class="t" style="left:34.18px;top:5px;transform:scaleX(0.9546);">2431.66</div></div>
<div class="a" style="left:22px;top:315px;width:1420px;height:22px;background:#CAF5CB"></div>
<div class="cb" style="left:28px;top:319px"><svg width="12" height="12" viewBox="0 0 12 12" style="display:block"><path d="M2.2 6.2 L5.1 9 L9.8 3" fill="none" stroke="#1E1E1E" stroke-width="1.6"/></svg></div>
<div class="t" style="left:48.30px;top:320px;transform:scaleX(0.8494);">BSK_1D</div>
<div class="t" style="left:132.30px;top:320px;transform:scaleX(0.9624);">Long</div>
<div class="t" style="left:225.30px;top:320px;transform:scaleX(0.9500);">IN</div>
<div class="badge" style="left:280px;top:317.2px;border-color:#6C6C6C"></div>
<div class="t" style="left:290.20px;top:321.5px;font-size:10px;color:#6C6C6C;transform:scaleX(0.8240);line-height:12px;height:12px;-webkit-text-stroke:0.25px #6C6C6C;">OFFLINE</div>
<div class="t" style="left:342.30px;top:320px;transform:scaleX(0.9799);">Portfolio 5: Strategy Signals Removed For Website Picture</div>
<div class="t" style="left:698.75px;top:320px;transform:scaleX(0.9230);">SL 7.00 pct, TL...</div>
<svg class="a" style="left:788px;top:315px" width="49" height="22"><rect width="49" height="22" fill="#fff" fill-opacity="0.78"/><path d="M0.4 20.6 L6.9 19.5 L11.2 18.5 L15.5 16.4 L17.6 13.2 L19.8 9.0 L24.1 8.3 L27.3 6.8 L29.4 4.1 L32.7 5.8 L35.9 5.8 L39.1 3.7 L42.3 1.1 L45.6 0.7 L49.0 0.5 L49 22 L0 22Z" fill="#96B3DB"/><path d="M0.4 20.6 L6.9 19.5 L11.2 18.5 L15.5 16.4 L17.6 13.2 L19.8 9.0 L24.1 8.3 L27.3 6.8 L29.4 4.1 L32.7 5.8 L35.9 5.8 L39.1 3.7 L42.3 1.1 L45.6 0.7 L49.0 0.5" fill="none" stroke="#7FA1D0" stroke-width="1"/></svg>
<div class="t" style="left:852.17px;top:320px;transform:scaleX(0.9594);">7794937.50</div>
<div class="t" style="left:970.99px;top:320px;transform:scaleX(0.9422);">0.00</div>
<div class="t" style="left:1012.17px;top:320px;transform:scaleX(0.9594);">1306634.50</div>
<div class="t" style="left:1130.99px;top:320px;transform:scaleX(0.9422);">5.97</div>
<div class="t" style="left:1213.59px;top:320px;transform:scaleX(0.9690);">376</div>
<div class="t" style="left:1284.52px;top:320px;transform:scaleX(0.9483);">0.245</div>
<div class="t" style="left:1338.64px;top:320px;transform:scaleX(0.9581);">156446.70</div>
<div class="a" style="left:1398px;top:315px;width:44px;height:22px;overflow:hidden"><div class="t" style="left:27.71px;top:5px;transform:scaleX(0.9566);">23291.75</div></div>
<svg class="a" style="left:11.8px;top:322.2px" width="5" height="8"><path d="M0 0 L4.3 3.8 L0 7.6Z" fill="#1E1E1E"/></svg>
<div class="a" style="left:22px;top:337px;width:1420px;height:22px;background:#C6F4C8"></div>
<div class="cb" style="left:28px;top:341px"><svg width="12" height="12" viewBox="0 0 12 12" style="display:block"><path d="M2.2 6.2 L5.1 9 L9.8 3" fill="none" stroke="#1E1E1E" stroke-width="1.6"/></svg></div>
<div class="t" style="left:48.30px;top:342px;transform:scaleX(0.8545);">@ES_1D</div>
<div class="t" style="left:132.30px;top:342px;transform:scaleX(0.9624);">Long</div>
<div class="t" style="left:225.30px;top:342px;transform:scaleX(0.9500);">IN</div>
<div class="badge" style="left:280px;top:339.2px;border-color:#6C6C6C"></div>
<div class="t" style="left:290.20px;top:343.5px;font-size:10px;color:#6C6C6C;transform:scaleX(0.8240);line-height:12px;height:12px;-webkit-text-stroke:0.25px #6C6C6C;">OFFLINE</div>
<div class="t" style="left:342.30px;top:342px;">Pacific Northwest CDD[0] &lt;= 0, high[1] &lt;= high[5], close[0] &gt; s...</div>
<div class="t" style="left:726.00px;top:342px;transform:scaleX(0.9592);">MaxTime 1</div>
<svg class="a" style="left:788px;top:337px" width="49" height="22"><rect width="49" height="22" fill="#fff" fill-opacity="0.78"/><path d="M0.4 20.4 L6.9 19.9 L13.3 18.9 L19.8 16.8 L24.1 14.7 L28.4 13.6 L32.7 11.9 L35.9 9.4 L38.0 9.8 L40.2 8.3 L43.4 6.2 L46.6 3.0 L49.0 0.5 L49 22 L0 22Z" fill="#96B3DB"/><path d="M0.4 20.4 L6.9 19.9 L13.3 18.9 L19.8 16.8 L24.1 14.7 L28.4 13.6 L32.7 11.9 L35.9 9.4 L38.0 9.8 L40.2 8.3 L43.4 6.2 L46.6 3.0 L49.0 0.5" fill="none" stroke="#7FA1D0" stroke-width="1"/></svg>
<div class="t" style="left:852.17px;top:342px;transform:scaleX(0.9594);">5870736.50</div>
<div class="t" style="left:970.99px;top:342px;transform:scaleX(0.9422);">0.00</div>
<div class="t" style="left:1018.64px;top:342px;transform:scaleX(0.9581);">448468.50</div>
<div class="t" style="left:1124.52px;top:342px;transform:scaleX(0.9483);">13.09</div>
<div class="t" style="left:1213.59px;top:342px;transform:scaleX(0.9690);">213</div>
<div class="t" style="left:1284.52px;top:342px;transform:scaleX(0.9483);">0.610</div>
<div class="t" style="left:1345.11px;top:342px;transform:scaleX(0.9566);">86580.51</div>
<div class="a" style="left:1398px;top:337px;width:44px;height:22px;overflow:hidden"><div class="t" style="left:27.71px;top:5px;transform:scaleX(0.9566);">64812.40</div></div>
<div class="a" style="left:22px;top:359px;width:1420px;height:22px;background:#CAF5CB"></div>
<div class="cb" style="left:28px;top:363px"><svg width="12" height="12" viewBox="0 0 12 12" style="display:block"><path d="M2.2 6.2 L5.1 9 L9.8 3" fill="none" stroke="#1E1E1E" stroke-width="1.6"/></svg></div>
<div class="t" style="left:48.30px;top:364px;transform:scaleX(0.8545);">@ES_1D</div>
<div class="t" style="left:132.30px;top:364px;transform:scaleX(0.9624);">Long</div>
<div class="t" style="left:225.30px;top:364px;transform:scaleX(0.9500);">IN</div>
<div class="badge" style="left:280px;top:361.2px;border-color:#6C6C6C"></div>
<div class="t" style="left:290.20px;top:365.5px;font-size:10px;color:#6C6C6C;transform:scaleX(0.8240);line-height:12px;height:12px;-webkit-text-stroke:0.25px #6C6C6C;">OFFLINE</div>
<div class="t" style="left:342.30px;top:364px;transform:scaleX(0.9859);">Chicago Prec Index[0] &lt;= Chicago Prec Index[1], close[0] &lt;= hi...</div>
<div class="t" style="left:726.00px;top:364px;transform:scaleX(0.9592);">MaxTime 1</div>
<svg class="a" style="left:788px;top:359px" width="49" height="22"><rect width="49" height="22" fill="#fff" fill-opacity="0.78"/><path d="M0.4 20.6 L13.3 19.7 L21.9 18.3 L28.4 17.2 L32.7 15.6 L35.9 14.1 L39.1 12.0 L41.7 9.9 L44.5 6.8 L46.6 3.6 L49.0 0.9 L49 22 L0 22Z" fill="#96B3DB"/><path d="M0.4 20.6 L13.3 19.7 L21.9 18.3 L28.4 17.2 L32.7 15.6 L35.9 14.1 L39.1 12.0 L41.7 9.9 L44.5 6.8 L46.6 3.6 L49.0 0.9" fill="none" stroke="#7FA1D0" stroke-width="1"/></svg>
<div class="t" style="left:845.70px;top:364px;transform:scaleX(0.9604);">14428178.00</div>
<div class="t" style="left:970.99px;top:364px;transform:scaleX(0.9422);">0.00</div>
<div class="t" style="left:1012.17px;top:364px;transform:scaleX(0.9594);">1035404.00</div>
<div class="t" style="left:1124.52px;top:364px;transform:scaleX(0.9483);">13.93</div>
<div class="t" style="left:1213.59px;top:364px;transform:scaleX(0.9690);">329</div>
<div class="t" style="left:1284.52px;top:364px;transform:scaleX(0.9483);">0.635</div>
<div class="t" style="left:1338.64px;top:364px;transform:scaleX(0.9581);">120760.10</div>
<div class="a" style="left:1398px;top:359px;width:44px;height:22px;overflow:hidden"><div class="t" style="left:27.71px;top:5px;transform:scaleX(0.9566);">90034.25</div></div>
<div class="vsep" style="left:22px;top:117px;height:264px"></div>
<div class="vsep" style="left:47px;top:80px;height:301px"></div>
<div class="vsep" style="left:127px;top:80px;height:301px"></div>
<div class="vsep" style="left:207px;top:80px;height:301px"></div>
<div class="vsep" style="left:277px;top:80px;height:301px"></div>
<div class="vsep" style="left:337px;top:80px;height:301px"></div>
<div class="vsep" style="left:687px;top:80px;height:301px"></div>
<div class="vsep" style="left:787px;top:80px;height:301px"></div>
<div class="vsep" style="left:837px;top:80px;height:301px"></div>
<div class="vsep" style="left:917px;top:80px;height:301px"></div>
<div class="vsep" style="left:997px;top:80px;height:301px"></div>
<div class="vsep" style="left:1077px;top:80px;height:301px"></div>
<div class="vsep" style="left:1157px;top:80px;height:301px"></div>
<div class="vsep" style="left:1237px;top:80px;height:301px"></div>
<div class="vsep" style="left:1317px;top:80px;height:301px"></div>
<div class="vsep" style="left:1397px;top:80px;height:301px"></div>
<div class="a" style="left:1442px;top:58px;width:1px;height:576px;background:#D0D0E0"></div>
<div class="a" style="left:1443px;top:58px;width:2.5px;height:576px;background:#F3F3F6"></div>
<div class="a" style="left:1445.4px;top:57px;width:29.6px;height:577px;background:#A5A5A5"></div>
<svg class="a" style="left:1445px;top:57px" width="30" height="30"><path d="M6.8 10 H23 M6.8 15 H23 M6.8 20 H23" stroke="#fff" stroke-width="1.9"/></svg>
<div class="a" style="left:1449px;top:173.1px;width:22px;height:1.2px;background:#CDCDCD"></div>
<div class="a" style="left:1449px;top:261.9px;width:22px;height:1.2px;background:#CDCDCD"></div>
<div class="a" style="left:1449px;top:490.9px;width:22px;height:1.2px;background:#CDCDCD"></div>
<svg class="a" style="left:1450px;top:91.1px" width="20.4" height="20" viewBox="0 0 20.4 20"><rect x="1.1" y="1.1" width="18" height="17.6" rx="3.4" fill="none" stroke="#fff" stroke-width="1.7"/><text x="3.70" y="13.6" font-family="Liberation Sans" font-size="10" font-weight="bold" fill="#fff" textLength="12.8" lengthAdjust="spacingAndGlyphs">EQ</text></svg>
<svg class="a" style="left:1450px;top:119.1px" width="20.4" height="20" viewBox="0 0 20.4 20"><g fill="none" stroke="#fff" stroke-width="1.7" stroke-linecap="round">
<path d="M1.1 7.6 V6.6 M13.6 1.1 H16 Q19.1 1.1 19.1 4.2 V6.4 M19.1 13.4 V15.6 Q19.1 18.7 16 18.7 H13.6 M6.6 18.7 H4.2 Q1.1 18.7 1.1 15.6 V13.4"/></g>
<path d="M1.4 5.6 V3.2 Q1.4 1.2 3.4 1.2 H6.4 V5.6Z" fill="none" stroke="#fff" stroke-width="1.3"/>
<text x="11.9" y="15.4" font-family="Liberation Sans" font-size="10" font-weight="bold" fill="#fff" text-anchor="middle" textLength="9" lengthAdjust="spacingAndGlyphs">M</text></svg>
<svg class="a" style="left:1450px;top:147.1px" width="20.4" height="20" viewBox="0 0 20.4 20"><rect x="1.1" y="1.1" width="18" height="17.6" rx="3.4" fill="none" stroke="#fff" stroke-width="1.7"/><path d="M5.4 5.9 L9 9.9 L5.4 13.9 M10.8 5.9 L14.4 9.9 L10.8 13.9" fill="none" stroke="#fff" stroke-width="2.1"/></svg>
<svg class="a" style="left:1450px;top:180.0px" width="20.4" height="20" viewBox="0 0 20.4 20"><rect x="1.1" y="1.1" width="18" height="17.6" rx="3.4" fill="none" stroke="#fff" stroke-width="1.7"/><path d="M3.2 11.2 L7 7.6 L10 9.6 L17 4.2" fill="none" stroke="#fff" stroke-width="1.4"/><path d="M3.2 15.6 L7 12 L10 14 L17 8.6" fill="none" stroke="#fff" stroke-width="1.4"/></svg>
<svg class="a" style="left:1450px;top:208.2px" width="20.4" height="20" viewBox="0 0 20.4 20"><rect x="1.1" y="1.1" width="18" height="17.6" rx="3.4" fill="none" stroke="#fff" stroke-width="1.7"/><text x="3.10" y="13.6" font-family="Liberation Sans" font-size="10" font-weight="bold" fill="#fff" textLength="14" lengthAdjust="spacingAndGlyphs">DD</text></svg>
<svg class="a" style="left:1450px;top:236.3px" width="20.4" height="20" viewBox="0 0 20.4 20"><rect x="1.1" y="1.1" width="18" height="17.6" rx="3.4" fill="none" stroke="#fff" stroke-width="1.7"/><text x="2.30" y="13.6" font-family="Liberation Sans" font-size="10" font-weight="bold" fill="#fff" textLength="15.6" lengthAdjust="spacingAndGlyphs">MC</text></svg>
<svg class="a" style="left:1450px;top:269.1px" width="20.4" height="20" viewBox="0 0 20.4 20"><rect x="1.1" y="1.1" width="18" height="17.6" rx="3.4" fill="none" stroke="#fff" stroke-width="1.7"/><text x="6.80" y="13.6" font-family="Liberation Sans" font-size="10" font-weight="bold" fill="#fff" textLength="6.6" lengthAdjust="spacingAndGlyphs">V</text></svg>
<svg class="a" style="left:1450px;top:297.1px" width="20.4" height="20" viewBox="0 0 20.4 20"><rect x="1.1" y="1.1" width="18" height="17.6" rx="3.4" fill="none" stroke="#fff" stroke-width="1.7"/><text x="7.10" y="13.6" font-family="Liberation Sans" font-size="10" font-weight="bold" fill="#fff" textLength="6" lengthAdjust="spacingAndGlyphs">R</text></svg>
<svg class="a" style="left:1450px;top:325.0px" width="20.4" height="20" viewBox="0 0 20.4 20"><rect x="1.1" y="1.1" width="18" height="17.6" rx="3.4" fill="none" stroke="#fff" stroke-width="1.7"/><text x="6.70" y="13.6" font-family="Liberation Sans" font-size="10" font-weight="bold" fill="#fff" textLength="6.8" lengthAdjust="spacingAndGlyphs">N</text></svg>
<svg class="a" style="left:1450px;top:353.1px" width="20.4" height="20" viewBox="0 0 20.4 20"><rect x="1.1" y="1.1" width="18" height="17.6" rx="3.4" fill="none" stroke="#fff" stroke-width="1.7"/><text x="4.40" y="13.6" font-family="Liberation Sans" font-size="10" font-weight="bold" fill="#fff" textLength="11.4" lengthAdjust="spacingAndGlyphs">ST</text></svg>
<svg class="a" style="left:1450px;top:381.1px" width="20.4" height="20" viewBox="0 0 20.4 20"><rect x="1.1" y="1.1" width="18" height="17.6" rx="3.4" fill="none" stroke="#fff" stroke-width="1.7"/><text x="4.20" y="13.6" font-family="Liberation Sans" font-size="10" font-weight="bold" fill="#fff" textLength="11.8" lengthAdjust="spacingAndGlyphs">PT</text></svg>
<svg class="a" style="left:1450px;top:409.1px" width="20.4" height="20" viewBox="0 0 20.4 20"><rect x="1.1" y="1.1" width="18" height="17.6" rx="3.4" fill="none" stroke="#fff" stroke-width="1.7"/><text x="2.80" y="13.6" font-family="Liberation Sans" font-size="10" font-weight="bold" fill="#fff" textLength="14.6" lengthAdjust="spacingAndGlyphs">WF</text></svg>
<svg class="a" style="left:1450px;top:437.1px" width="20.4" height="20" viewBox="0 0 20.4 20"><rect x="1.1" y="1.1" width="18" height="17.6" rx="3.4" fill="none" stroke="#fff" stroke-width="1.7"/><text x="5.90" y="13.6" font-family="Liberation Sans" font-size="10" font-weight="bold" fill="#fff" textLength="8.4" lengthAdjust="spacingAndGlyphs">IE</text></svg>
<svg class="a" style="left:1450px;top:465.1px" width="20.4" height="20" viewBox="0 0 20.4 20"><rect x="1.1" y="1.1" width="18" height="17.6" rx="3.4" fill="none" stroke="#fff" stroke-width="1.7"/><text x="4.10" y="13.6" font-family="Liberation Sans" font-size="10" font-weight="bold" fill="#fff" textLength="12" lengthAdjust="spacingAndGlyphs">SB</text></svg>
<svg class="a" style="left:1450px;top:498.1px" width="20.4" height="20" viewBox="0 0 20.4 20"><rect x="1.1" y="1.1" width="18" height="17.6" rx="3.4" fill="none" stroke="#fff" stroke-width="1.7"/><text x="4.80" y="13.6" font-family="Liberation Sans" font-size="10" font-weight="bold" fill="#fff" textLength="10.6" lengthAdjust="spacingAndGlyphs">EL</text></svg>
<svg class="a" style="left:1450px;top:526.6px" width="20.4" height="20" viewBox="0 0 20.4 20"><rect x="1.1" y="1.1" width="18" height="17.6" rx="3.4" fill="none" stroke="#fff" stroke-width="1.7"/><text x="3.80" y="13.6" font-family="Liberation Sans" font-size="10" font-weight="bold" fill="#fff" textLength="12.6" lengthAdjust="spacingAndGlyphs">NT</text></svg>
<svg class="a" style="left:1450px;top:554.6px" width="20.4" height="20" viewBox="0 0 20.4 20"><rect x="1.1" y="1.1" width="18" height="17.6" rx="3.4" fill="none" stroke="#fff" stroke-width="1.7"/><text x="3.10" y="13.6" font-family="Liberation Sans" font-size="10" font-weight="bold" fill="#fff" textLength="14" lengthAdjust="spacingAndGlyphs">MT</text></svg>
<svg class="a" style="left:1450px;top:582.6px" width="20.4" height="20" viewBox="0 0 20.4 20"><rect x="1.1" y="1.1" width="18" height="17.6" rx="3.4" fill="none" stroke="#fff" stroke-width="1.7"/><text x="3.10" y="13.6" font-family="Liberation Sans" font-size="10" font-weight="bold" fill="#fff" textLength="14" lengthAdjust="spacingAndGlyphs">MT</text></svg>
<svg class="a" style="left:1450px;top:610.6px" width="20.4" height="20" viewBox="0 0 20.4 20"><rect x="1.1" y="1.1" width="18" height="17.6" rx="3.4" fill="none" stroke="#fff" stroke-width="1.7"/><text x="4.30" y="13.6" font-family="Liberation Sans" font-size="10" font-weight="bold" fill="#fff" textLength="11.6" lengthAdjust="spacingAndGlyphs">PS</text></svg>
<div class="a" style="left:1480px;top:34px;width:438px;height:484px;background:#FAFAFA;border:1px solid #CCCEDB"></div>
<div class="a" style="left:1481px;top:35px;width:436px;height:22px;background:#F5F5F7"></div>
<div class="t" style="left:1486.30px;top:40px;color:#8C8C8C;transform:scaleX(0.9542);">Chart</div>
<svg class="a" style="left:1521px;top:43px" width="356" height="5"><defs><pattern id="dg" width="4" height="4" patternUnits="userSpaceOnUse"><rect x="0" y="0" width="1" height="1" fill="#C4C4CC"/><rect x="2" y="2" width="1" height="1" fill="#C4C4CC"/></pattern></defs><rect width="356" height="5" fill="url(#dg)"/></svg>
<svg class="a" style="left:1880px;top:37px" width="36" height="18" viewBox="0 0 36 18">
<path d="M7 3.5 H12 M7.5 3 V9.5 M6 9.5 H13 M9.5 10 V14" stroke="#1E1E1E" stroke-width="1" fill="none"/><rect x="10" y="3" width="2" height="6.5" fill="#1E1E1E"/>
<path d="M21.5 5.1 L30.5 13.2 M30.5 5.1 L21.5 13.2" stroke="#1E1E1E" stroke-width="1.5" fill="none"/></svg>
<div class="a" style="left:1481px;top:57px;width:436px;height:24px;background:#EEEEF2"></div>
<svg class="a" style="left:1481px;top:57px" width="436" height="24" viewBox="1481 57 436 24">
<rect x="1485.5" y="62.5" width="14.2" height="11" fill="#F6F6F8" stroke="#4F4F4F" stroke-width="1.1"/>
<path d="M1487.3 70.4 C1488.6 67.6 1490 67.2 1491.3 68.8 C1492.8 70.4 1494.2 69.6 1495.2 67.4 C1496 65.8 1496.8 65.2 1497.6 65" fill="none" stroke="#E6A640" stroke-width="1.1"/>
<rect x="1494" y="70" width="8" height="6.4" fill="#EEEEF2"/>
<path d="M1494.9 73.1 H1501.1 M1498 70.1 V76.1" stroke="#20A857" stroke-width="2.3" fill="none"/>
<path d="M1508.1 68.0 H1515.9 L1512.0 72.0Z" fill="#1E1E1E"/>
<g transform="translate(1530.3 69.3) rotate(-44)"><path d="M-1.6 -2.6 H5.2 Q5.9 -2.6 5.9 -1.9 V1.9 Q5.9 2.6 5.2 2.6 H-1.6Z" fill="#D9502F"/><path d="M-1.6 -2.6 H-3.4 Q-6.1 -2.6 -6.1 0 Q-6.1 2.6 -3.4 2.6 H-1.6Z" fill="#3A78D6"/></g>
<path d="M1545.9 68.0 H1553.7 L1549.8 72.0Z" fill="#1E1E1E"/>
<rect x="1561.8" y="60.3" width="1" height="18.3" fill="#C8C8DC"/>
<rect x="1641.0" y="60.3" width="1" height="18.3" fill="#C8C8DC"/>
<rect x="1673.9" y="60.3" width="1" height="18.3" fill="#C8C8DC"/>
<rect x="1730.0" y="60.3" width="1" height="18.3" fill="#C8C8DC"/>
<path d="M1571.9 62.3 V75.5 H1586.8" fill="none" stroke="#9A9A9A" stroke-width="1"/>
<path d="M1570.6 63.5 H1571.9 M1570.6 65.5 H1571.9 M1570.6 67.5 H1571.9 M1570.6 71.5 H1571.9 M1570.6 73.5 H1571.9" stroke="#9A9A9A" stroke-width="0.8"/>
<path d="M1574.2 72.3 L1577.5 67.8 L1581.2 71 L1586.2 66.4" fill="none" stroke="#5A5A5A" stroke-width="1.4"/>
<path d="M1570.8 69.3 H1586.9" stroke="#E0452C" stroke-width="1.2"/>
<path d="M1595.3 62.3 V75.5 H1609.6" fill="none" stroke="#9A9A9A" stroke-width="1"/>
<path d="M1597.5 75.5 V76.7 M1599.5 75.5 V76.7 M1601.5 75.5 V76.7 M1605.5 75.5 V76.7 M1607.5 75.5 V76.7 M1609.3 75.5 V76.7" stroke="#9A9A9A" stroke-width="0.8"/>
<path d="M1597.1 72.3 L1601.2 67.8 L1605 71.4 L1609.6 66.4" fill="none" stroke="#5A5A5A" stroke-width="1.4"/>
<path d="M1603.3 61.8 V76.2" stroke="#E0452C" stroke-width="1.2"/>
<path d="M1617.9 71.4 L1631.7 67.2" stroke="#5A5A5A" stroke-width="1.3"/>
<path d="M1617.9 74.5 L1629.6 63.5" stroke="#E0452C" stroke-width="1.3"/>
<path d="M1650.9 65.2 H1655.2 L1656 63.1 H1661.6 L1662.4 65.2 H1665 V74.8 H1650.9Z" fill="#595959"/>
<circle cx="1657.9" cy="69.8" r="2.5" fill="none" stroke="#F0F0F3" stroke-width="1.4"/>
<circle cx="1653.8" cy="66.9" r="0.8" fill="#F0F0F3"/>
<rect x="1684.5" y="63.6" width="13" height="11.8" fill="none" stroke="#666" stroke-width="1.1"/>
<path d="M1695.9 64.2 V73.4 H1692.9" fill="none" stroke="#666" stroke-width="0.9"/>
<path d="M1688.4 63.8 Q1688.6 62.2 1690.3 62 Q1692 62.2 1692.2 63.8 V64.6 H1688.4Z" fill="#EEEEF2" stroke="#666" stroke-width="0.9"/>
<path d="M1686.6 67.1 H1693.2 M1686.6 69.5 H1693.2 M1686.6 71.9 H1690.4" stroke="#777" stroke-width="1"/>
<rect x="1691.9" y="72.2" width="2.2" height="2.2" fill="none" stroke="#777" stroke-width="0.8"/>
<path d="M1711 62.2 L1713 62.2 L1712.3 71 L1713.9 71 L1710.4 75.9 L1706.7 71 L1708.9 71 Q1708.3 66.5 1711 62.2Z" fill="#595959"/>
<path d="M1717.7 62.1 L1721.4 67 L1719.7 67 Q1719.9 72 1716.9 75.9 L1715.3 75.9 L1716.1 67 L1714.3 67Z" fill="#595959"/>
<circle cx="1747" cy="69.1" r="6.9" fill="#595959"/>
<rect x="1746" y="66.9" width="2" height="7" fill="#F4F4F6"/><rect x="1746" y="64.1" width="2" height="2" fill="#F4F4F6"/>
<path d="M1762.1 68.0 H1769.9 L1766.0 72.0Z" fill="#1E1E1E"/>
<rect x="1781.5" y="58.5" width="99" height="21" fill="#FFFFFF" stroke="#CCCEDB" stroke-width="1"/>
<path d="M1868.1 68.0 H1875.9 L1872.0 72.0Z" fill="#1E1E1E"/>
</svg>
<div class="t" style="left:1787.00px;top:63px;transform:scaleX(0.9461);">Transparent</div>
<svg class="a" style="left:1481px;top:81px" width="436" height="327" viewBox="1481 81 436 327">
<rect x="1481" y="81" width="1" height="306.7" fill="#CFCFE0"/><rect x="1480.65" y="81" width="1.7" height="306.7" fill="#CFCFE0" fill-opacity="0.35"/>
<rect x="1490" y="81" width="1" height="303.6" fill="#E4E4EF"/>
<rect x="1499" y="81" width="1" height="303.6" fill="#E4E4EF"/>
<rect x="1507" y="81" width="1" height="303.6" fill="#E4E4EF"/>
<rect x="1516" y="81" width="1" height="303.6" fill="#E4E4EF"/>
<rect x="1525" y="81" width="1" height="306.7" fill="#CFCFE0"/><rect x="1524.65" y="81" width="1.7" height="306.7" fill="#CFCFE0" fill-opacity="0.35"/>
<rect x="1534" y="81" width="1" height="303.6" fill="#E4E4EF"/>
<rect x="1542" y="81" width="1" height="303.6" fill="#E4E4EF"/>
<rect x="1551" y="81" width="1" height="303.6" fill="#E4E4EF"/>
<rect x="1560" y="81" width="1" height="303.6" fill="#E4E4EF"/>
<rect x="1569" y="81" width="1" height="306.7" fill="#CFCFE0"/><rect x="1568.65" y="81" width="1.7" height="306.7" fill="#CFCFE0" fill-opacity="0.35"/>
<rect x="1577" y="81" width="1" height="303.6" fill="#E4E4EF"/>
<rect x="1586" y="81" width="1" height="303.6" fill="#E4E4EF"/>
<rect x="1595" y="81" width="1" height="303.6" fill="#E4E4EF"/>
<rect x="1604" y="81" width="1" height="303.6" fill="#E4E4EF"/>
<rect x="1612" y="81" width="1" height="306.7" fill="#CFCFE0"/><rect x="1611.65" y="81" width="1.7" height="306.7" fill="#CFCFE0" fill-opacity="0.35"/>
<rect x="1621" y="81" width="1" height="303.6" fill="#E4E4EF"/>
<rect x="1630" y="81" width="1" height="303.6" fill="#E4E4EF"/>
<rect x="1639" y="81" width="1" height="303.6" fill="#E4E4EF"/>
<rect x="1647" y="81" width="1" height="303.6" fill="#E4E4EF"/>
<rect x="1656" y="81" width="1" height="306.7" fill="#CFCFE0"/><rect x="1655.65" y="81" width="1.7" height="306.7" fill="#CFCFE0" fill-opacity="0.35"/>
<rect x="1665" y="81" width="1" height="303.6" fill="#E4E4EF"/>
<rect x="1674" y="81" width="1" height="303.6" fill="#E4E4EF"/>
<rect x="1683" y="81" width="1" height="303.6" fill="#E4E4EF"/>
<rect x="1691" y="81" width="1" height="303.6" fill="#E4E4EF"/>
<rect x="1700" y="81" width="1" height="306.7" fill="#CFCFE0"/><rect x="1699.65" y="81" width="1.7" height="306.7" fill="#CFCFE0" fill-opacity="0.35"/>
<rect x="1709" y="81" width="1" height="303.6" fill="#E4E4EF"/>
<rect x="1718" y="81" width="1" height="303.6" fill="#E4E4EF"/>
<rect x="1726" y="81" width="1" height="303.6" fill="#E4E4EF"/>
<rect x="1735" y="81" width="1" height="303.6" fill="#E4E4EF"/>
<rect x="1744" y="81" width="1" height="306.7" fill="#CFCFE0"/><rect x="1743.65" y="81" width="1.7" height="306.7" fill="#CFCFE0" fill-opacity="0.35"/>
<rect x="1753" y="81" width="1" height="303.6" fill="#E4E4EF"/>
<rect x="1761" y="81" width="1" height="303.6" fill="#E4E4EF"/>
<rect x="1770" y="81" width="1" height="303.6" fill="#E4E4EF"/>
<rect x="1779" y="81" width="1" height="303.6" fill="#E4E4EF"/>
<rect x="1788" y="81" width="1" height="306.7" fill="#CFCFE0"/><rect x="1787.65" y="81" width="1.7" height="306.7" fill="#CFCFE0" fill-opacity="0.35"/>
<rect x="1796" y="81" width="1" height="303.6" fill="#E4E4EF"/>
<rect x="1805" y="81" width="1" height="303.6" fill="#E4E4EF"/>
<rect x="1814" y="81" width="1" height="303.6" fill="#E4E4EF"/>
<rect x="1823" y="81" width="1" height="303.6" fill="#E4E4EF"/>
<rect x="1831" y="81" width="1" height="306.7" fill="#CFCFE0"/><rect x="1830.65" y="81" width="1.7" height="306.7" fill="#CFCFE0" fill-opacity="0.35"/>
<rect x="1840" y="81" width="1" height="303.6" fill="#E4E4EF"/>
<rect x="1849" y="81" width="1" height="303.6" fill="#E4E4EF"/>
<rect x="1858" y="81" width="1" height="303.6" fill="#E4E4EF"/>
<rect x="1481" y="86" width="384.7" height="1" fill="#E4E4EF"/>
<rect x="1481" y="97" width="384.7" height="1" fill="#E4E4EF"/>
<rect x="1481" y="109" width="384.7" height="1" fill="#E4E4EF"/>
<rect x="1481" y="120" width="387.7" height="1" fill="#CFCFE0"/><rect x="1481" y="119.65" width="387.7" height="1.7" fill="#CFCFE0" fill-opacity="0.35"/>
<rect x="1481" y="131" width="384.7" height="1" fill="#E4E4EF"/>
<rect x="1481" y="143" width="384.7" height="1" fill="#E4E4EF"/>
<rect x="1481" y="154" width="384.7" height="1" fill="#E4E4EF"/>
<rect x="1481" y="165" width="384.7" height="1" fill="#E4E4EF"/>
<rect x="1481" y="177" width="387.7" height="1" fill="#CFCFE0"/><rect x="1481" y="176.65" width="387.7" height="1.7" fill="#CFCFE0" fill-opacity="0.35"/>
<rect x="1481" y="188" width="384.7" height="1" fill="#E4E4EF"/>
<rect x="1481" y="199" width="384.7" height="1" fill="#E4E4EF"/>
<rect x="1481" y="211" width="384.7" height="1" fill="#E4E4EF"/>
<rect x="1481" y="222" width="384.7" height="1" fill="#E4E4EF"/>
<rect x="1481" y="233" width="387.7" height="1" fill="#CFCFE0"/><rect x="1481" y="232.65" width="387.7" height="1.7" fill="#CFCFE0" fill-opacity="0.35"/>
<rect x="1481" y="245" width="384.7" height="1" fill="#E4E4EF"/>
<rect x="1481" y="256" width="384.7" height="1" fill="#E4E4EF"/>
<rect x="1481" y="267" width="384.7" height="1" fill="#E4E4EF"/>
<rect x="1481" y="279" width="384.7" height="1" fill="#E4E4EF"/>
<rect x="1481" y="290" width="387.7" height="1" fill="#CFCFE0"/><rect x="1481" y="289.65" width="387.7" height="1.7" fill="#CFCFE0" fill-opacity="0.35"/>
<rect x="1481" y="301" width="384.7" height="1" fill="#E4E4EF"/>
<rect x="1481" y="313" width="384.7" height="1" fill="#E4E4EF"/>
<rect x="1481" y="324" width="384.7" height="1" fill="#E4E4EF"/>
<rect x="1481" y="335" width="384.7" height="1" fill="#E4E4EF"/>
<rect x="1481" y="347" width="387.7" height="1" fill="#CFCFE0"/><rect x="1481" y="346.65" width="387.7" height="1.7" fill="#CFCFE0" fill-opacity="0.35"/>
<rect x="1481" y="358" width="384.7" height="1" fill="#E4E4EF"/>
<rect x="1481" y="369" width="384.7" height="1" fill="#E4E4EF"/>
<rect x="1481" y="81" width="1.4" height="304" fill="#C6C6DA"/>
<text x="1637.5" y="244" font-family="Liberation Sans" font-size="32" fill="#ABABAB" fill-opacity="0.9" textLength="68" lengthAdjust="spacingAndGlyphs">@ES</text>
<path d="M1483 373V376M1483 373V375M1484 372V374M1484 371V374M1485 370V374M1486 369V373M1486 368V371M1486 369V372M1488 367V369M1488 367V370M1489 368V372M1489 370V373M1490 371V374M1490 370V373M1491 372V375M1491 373V376M1492 373V376M1492 375V378M1493 374V377M1493 374V378M1493 375V378M1494 377V379M1495 374V378M1496 372V375M1498 371V373M1499 369V372M1499 367V371M1500 367V371M1501 365V368M1501 365V368M1503 362V364M1504 363V366M1506 361V363M1506 361V364M1507 361V363M1507 361V363M1508 360V362M1508 360V362M1509 359V361M1509 359V361M1510 359V361M1512 359V361M1512 359V362M1512 360V362M1513 359V363M1513 360V364M1513 361V364M1514 361V365M1514 362V364M1515 362V366M1515 364V367M1516 364V367M1516 365V368M1517 366V368M1517 366V370M1518 368V371M1518 368V372M1518 368V373M1519 369V372M1521 368V371M1522 366V369M1523 365V369M1525 363V367M1525 363V366M1525 362V365M1526 360V363M1527 359V362M1528 358V361M1530 355V357M1530 353V358M1531 353V357M1531 353V356M1532 354V356M1532 356V358M1533 355V360M1533 356V359M1534 356V360M1535 357V362M1535 359V362M1536 359V362M1538 356V360M1539 356V359M1541 353V356M1543 351V354M1543 350V354M1544 352V356M1545 354V356M1546 354V358M1546 355V357M1546 354V358M1547 353V357M1547 353V358M1547 352V355M1548 353V355M1552 347V349M1552 345V348M1555 341V345M1555 341V345M1558 340V343M1558 337V343M1558 339V342M1559 339V342M1559 337V340M1559 337V339M1561 335V340M1561 335V339M1562 335V338M1562 335V339M1564 334V336M1564 334V337M1565 333V336M1566 332V336M1567 329V337M1568 332V334M1569 331V333M1569 331V335M1570 332V334M1571 332V334M1572 331V333M1574 325V328M1575 326V328M1575 324V329M1575 324V328M1576 325V327M1577 323V326M1578 322V325M1579 322V325M1579 321V324M1579 321V324M1580 321V326M1581 320V323M1581 318V320M1582 320V322M1588 322V326M1589 316V322M1590 313V318M1591 315V317M1591 313V317M1593 311V314M1594 309V313M1596 308V311M1596 308V311M1597 310V313M1598 309V316M1599 307V310M1600 310V312M1600 309V312M1601 311V313M1602 307V315M1602 310V316M1602 311V315M1603 312V315M1603 312V315M1604 313V318M1604 314V318M1606 317V321M1606 317V320M1608 319V326M1608 318V323M1610 311V315M1611 308V317M1611 312V316M1612 312V316M1612 315V319M1613 316V321M1614 316V324M1615 321V326M1615 322V327M1615 323V327M1616 326V328M1616 324V327M1616 319V325M1617 316V323M1617 315V321M1618 314V319M1619 314V318M1620 313V316M1620 313V315M1621 311V313M1621 310V312M1621 310V312M1623 309V313M1624 307V310M1625 307V311M1625 305V308M1626 304V309M1627 301V306M1628 304V307M1629 304V306M1631 303V308M1631 305V310M1632 307V311M1633 302V311M1634 303V309M1634 302V308M1635 301V305M1636 300V303M1638 295V298M1638 294V300M1639 291V297M1641 287V291M1644 289V292M1645 287V290M1646 289V291M1646 288V291M1647 286V290M1648 283V289M1648 287V290M1649 284V287M1650 286V290M1650 286V290M1650 285V289M1652 283V286M1653 283V289M1653 280V287M1653 281V286M1654 279V285M1655 278V282M1655 277V283M1656 272V279M1656 270V279M1656 271V277M1658 265V273M1659 263V270M1660 265V271M1661 264V276M1662 271V279M1662 271V281M1662 274V280M1663 275V284M1663 278V280M1663 274V283M1665 273V279M1666 276V278M1667 271V275M1668 270V274M1669 271V273M1669 267V269M1670 264V269M1673 261V268M1673 260V266M1674 261V265M1675 263V272M1675 263V270M1675 264V273M1676 267V274M1676 267V277M1677 272V279M1677 275V284M1678 276V288M1678 281V290M1679 290V296M1680 293V296M1680 284V293M1681 278V288M1682 274V282M1683 274V278M1683 273V276M1683 271V276M1684 269V274M1684 266V272M1686 264V270M1688 263V267M1688 263V266M1689 260V265M1689 259V265M1690 264V268M1690 263V268M1692 261V267M1692 263V267M1693 264V271M1693 266V268M1694 262V269M1696 257V265M1697 254V260M1698 252V259M1698 251V261M1699 254V260M1700 251V256M1702 248V252M1704 239V245M1704 237V243M1705 232V242M1706 239V267M1706 247V279M1706 258V289M1707 268V299M1708 285V303M1708 279V296M1710 259V265M1710 258V265M1710 257V263M1711 256V264M1711 256V261M1712 247V252M1715 238V244M1716 223V232M1717 222V229M1717 224V227M1717 227V230M1718 228V232M1718 228V233M1719 227V234M1719 231V234M1719 231V237M1720 235V238M1720 235V238M1721 228V235M1722 225V233M1723 224V231M1723 219V226M1724 221V228M1724 218V224M1724 217V222M1725 211V222M1725 212V220M1726 205V213M1726 206V211M1727 202V210M1728 199V207M1729 197V206M1729 198V203M1730 191V201M1731 189V199M1732 185V190M1733 186V191M1736 176V186M1737 174V182M1738 172V177M1739 173V177M1741 165V172M1741 164V170M1744 155V160M1746 153V155M1747 153V157M1747 153V164M1748 154V164M1748 158V164M1749 157V167M1749 163V171M1749 167V178M1750 170V178M1751 170V177M1753 168V181M1754 172V185M1754 177V191M1754 179V193M1755 186V203M1755 196V210M1756 199V213M1756 204V219M1756 214V221M1758 198V206M1760 180V195M1760 184V188M1760 182V191M1762 195V209M1763 204V216M1763 210V220M1764 214V223M1764 219V224M1765 210V221M1765 206V218M1766 194V209M1767 192V208M1767 193V201M1768 193V202M1769 192V198M1769 192V198M1769 197V203M1770 199V206M1771 200V212M1771 203V207M1772 202V207M1772 196V204M1773 196V202M1776 183V189M1777 183V187M1777 183V190M1778 175V188M1779 174V179M1781 164V171M1781 169V177M1782 173V182M1782 175V182M1783 172V183M1783 173V187M1783 178V185M1784 179V194M1784 181V188M1785 182V190M1785 182V195M1785 186V195M1786 192V200M1787 197V199M1787 189V196M1789 174V184M1789 171V182M1791 161V169M1792 154V164M1793 147V153M1794 142V152M1795 145V149M1796 148V153M1796 148V153M1797 147V155M1798 147V153M1799 143V150M1799 135V145M1800 129V151M1800 127V145M1801 125V138M1803 120V125M1803 123V125M1804 120V128M1805 116V118M1806 115V123M1806 117V123M1806 119V123M1807 112V119M1808 107V117M1810 104V124M1810 102V120M1811 100V109M1812 101V108M1813 102V107M1813 105V107M1814 100V102M1814 99V106M1815 101V119M1816 102V133M1816 111V142M1816 125V149M1817 145V171M1817 157V178M1818 175V185M1818 157V174M1824 89V99M1825 87V95M1825 88V93M1825 86V97M1826 81V95M1827 82V91M1827 81V91M1828 80V88M1828 75V81" stroke="#FA0808" stroke-width="2" fill="none" shape-rendering="crispEdges"/>
<path d="M1483 372V375M1484 372V375M1485 371V374M1485 370V373M1487 369V372M1487 370V372M1487 368V371M1488 366V371M1489 369V372M1490 370V374M1491 370V374M1492 374V378M1494 376V380M1494 375V379M1495 376V378M1495 374V377M1496 372V376M1496 372V374M1497 371V373M1497 372V374M1497 371V375M1498 371V374M1498 370V373M1499 370V372M1500 367V372M1500 367V369M1501 365V368M1502 364V367M1502 364V367M1502 363V366M1503 363V365M1503 362V365M1504 361V367M1504 362V365M1505 361V364M1505 360V365M1505 362V365M1506 359V364M1507 361V363M1508 359V362M1509 359V361M1510 358V363M1510 359V361M1511 359V362M1511 360V362M1511 359V362M1514 361V365M1515 363V366M1516 365V369M1517 367V371M1519 370V373M1519 370V372M1520 369V373M1520 370V373M1520 370V372M1521 368V373M1521 367V370M1522 367V371M1522 366V370M1523 366V370M1523 366V369M1524 366V369M1524 365V369M1524 363V368M1526 361V364M1526 360V363M1527 361V363M1527 359V362M1528 356V360M1528 356V360M1529 354V360M1529 357V359M1529 355V359M1530 355V357M1531 354V357M1532 356V358M1533 356V359M1534 357V360M1534 357V359M1535 357V361M1536 360V362M1536 358V362M1537 358V362M1537 358V361M1537 358V361M1538 358V361M1538 356V362M1539 357V360M1539 354V360M1540 353V357M1540 352V357M1540 352V357M1541 352V355M1541 350V356M1542 349V354M1542 350V353M1542 351V353M1543 351V353M1544 353V356M1544 353V355M1545 354V357M1545 355V357M1548 351V355M1548 350V355M1549 351V355M1549 351V354M1549 350V354M1550 350V353M1550 349V352M1550 349V352M1551 348V352M1551 347V353M1551 346V350M1552 346V350M1553 345V348M1553 345V349M1553 343V347M1554 342V345M1554 342V345M1554 341V346M1555 341V346M1556 341V345M1556 341V345M1556 341V343M1557 342V344M1557 340V343M1557 340V344M1560 336V339M1560 334V342M1560 336V340M1561 335V338M1562 335V337M1563 335V337M1563 334V337M1563 333V337M1564 331V338M1565 333V335M1565 332V337M1566 333V335M1566 333V335M1567 331V335M1567 331V334M1568 330V334M1568 331V333M1569 331V333M1570 331V333M1570 330V334M1571 330V335M1571 331V335M1572 330V332M1572 329V332M1573 327V331M1573 327V332M1573 326V329M1574 325V329M1574 325V329M1576 322V326M1576 323V327M1577 321V324M1577 321V325M1578 322V324M1578 322V324M1580 323V326M1580 322V325M1581 318V322M1582 320V322M1582 320V324M1583 320V323M1583 320V322M1583 320V324M1584 317V323M1584 320V324M1584 321V325M1585 321V324M1585 319V323M1585 319V323M1586 320V324M1586 322V325M1586 322V326M1587 324V326M1587 323V326M1587 324V327M1588 321V328M1588 320V326M1589 318V324M1589 314V321M1590 313V318M1590 313V319M1591 313V316M1592 314V316M1592 313V315M1592 313V315M1593 311V315M1593 312V316M1594 310V313M1594 310V313M1595 311V314M1595 307V314M1595 309V311M1596 308V311M1597 309V313M1597 311V314M1598 310V312M1598 309V311M1599 308V310M1599 309V311M1600 308V311M1601 310V312M1601 310V313M1603 310V318M1604 315V321M1605 315V320M1605 314V321M1605 317V321M1606 317V323M1607 321V326M1607 321V326M1607 321V325M1608 316V322M1609 315V320M1609 314V319M1609 312V319M1610 309V316M1610 309V313M1611 310V315M1612 314V319M1613 315V321M1613 315V320M1614 318V325M1614 320V324M1617 319V323M1618 314V325M1618 313V319M1619 312V317M1619 313V317M1620 314V316M1622 307V312M1622 310V314M1622 309V313M1623 307V311M1623 309V311M1624 304V312M1624 308V311M1625 305V311M1626 305V308M1626 304V307M1627 305V308M1627 303V307M1628 301V306M1628 306V308M1629 303V307M1629 304V307M1630 304V311M1630 304V310M1630 307V310M1631 305V310M1632 308V312M1632 307V310M1633 306V310M1633 305V310M1634 302V307M1635 302V306M1635 300V303M1636 300V303M1636 300V304M1637 300V304M1637 299V303M1637 295V301M1638 294V298M1639 291V298M1639 290V294M1640 287V290M1640 288V291M1640 286V292M1641 289V293M1641 288V290M1642 289V291M1642 290V292M1642 289V291M1643 288V292M1643 288V291M1643 288V290M1644 289V293M1644 289V291M1645 287V292M1645 287V291M1646 287V291M1647 285V287M1647 285V289M1648 286V289M1649 284V291M1649 286V290M1651 286V288M1651 285V288M1651 282V287M1652 282V288M1652 282V288M1654 280V287M1654 278V283M1655 276V279M1657 270V275M1657 269V274M1657 268V274M1658 267V273M1658 267V273M1659 264V269M1659 264V266M1660 263V268M1660 266V272M1661 267V276M1661 269V278M1664 277V280M1664 276V280M1664 273V283M1665 275V278M1665 275V278M1666 276V279M1666 272V278M1667 270V279M1667 271V274M1668 267V276M1668 266V277M1669 267V272M1670 263V269M1670 267V270M1671 265V269M1671 263V269M1671 263V267M1672 263V268M1672 263V269M1672 261V266M1673 261V266M1674 260V266M1674 261V266M1676 267V274M1677 277V284M1678 285V292M1679 287V295M1679 289V296M1680 289V296M1681 280V293M1681 281V289M1682 274V281M1682 271V278M1684 268V274M1685 265V272M1685 267V272M1685 266V272M1686 263V270M1686 264V270M1687 263V269M1687 264V268M1687 261V271M1688 262V264M1689 263V267M1690 261V266M1691 262V264M1691 260V267M1691 260V266M1692 261V265M1693 264V268M1694 264V271M1694 261V272M1695 257V269M1695 257V264M1695 258V264M1696 258V264M1696 255V264M1697 258V262M1697 258V262M1698 256V261M1699 255V259M1699 253V259M1700 253V258M1700 250V256M1701 249V256M1701 247V253M1701 247V252M1702 245V251M1702 240V251M1703 241V246M1703 243V248M1703 240V247M1704 238V244M1705 235V244M1705 232V250M1707 289V305M1707 297V302M1708 272V291M1709 265V283M1709 260V272M1709 260V268M1711 251V259M1712 251V255M1712 247V252M1713 247V252M1713 245V255M1713 244V250M1714 240V247M1714 238V244M1714 237V245M1715 235V244M1715 232V241M1716 229V239M1716 224V231M1718 228V234M1720 233V239M1721 233V241M1721 230V236M1722 224V235M1722 224V233M1723 222V230M1725 210V217M1726 206V216M1727 205V213M1727 203V209M1728 200V206M1728 198V207M1729 192V199M1730 189V197M1730 191V199M1731 190V196M1731 189V194M1732 187V194M1732 186V192M1733 184V191M1733 185V189M1734 187V190M1734 182V189M1734 182V187M1735 184V188M1735 180V185M1735 180V185M1736 179V185M1736 176V184M1737 176V180M1737 174V178M1738 174V184M1738 175V181M1739 171V176M1739 167V183M1740 169V177M1740 166V178M1740 164V173M1741 165V172M1742 164V169M1742 160V173M1742 155V164M1743 155V161M1743 157V163M1743 159V166M1744 154V161M1744 155V160M1745 156V162M1745 152V162M1745 147V156M1746 150V154M1746 150V154M1747 153V160M1748 155V166M1750 164V182M1750 171V176M1751 171V176M1751 166V175M1752 161V179M1752 160V170M1752 159V167M1753 161V165M1753 163V174M1755 188V210M1757 212V217M1757 205V215M1757 204V213M1758 201V213M1758 192V203M1759 188V199M1759 185V198M1759 186V197M1761 183V197M1761 186V200M1761 193V206M1762 201V214M1762 200V214M1763 211V223M1764 213V222M1765 205V214M1766 203V213M1766 200V212M1767 192V205M1768 194V201M1768 194V200M1770 197V205M1770 197V204M1771 202V204M1772 200V209M1773 196V203M1773 194V199M1774 195V202M1774 191V200M1774 193V197M1775 188V197M1775 190V196M1775 185V191M1776 183V190M1776 183V191M1777 180V186M1778 175V184M1778 178V185M1779 175V183M1779 165V182M1780 168V179M1780 168V176M1780 167V177M1781 168V175M1782 171V182M1784 174V190M1786 184V199M1786 193V198M1787 185V196M1788 181V190M1788 183V194M1788 176V187M1789 163V183M1790 163V184M1790 164V177M1790 163V174M1791 162V172M1791 156V166M1792 159V165M1792 151V162M1793 147V158M1793 143V150M1794 142V151M1794 137V150M1795 141V145M1795 145V150M1796 146V152M1797 148V154M1797 150V157M1798 152V157M1798 153V159M1799 141V153M1800 130V140M1801 125V136M1801 123V131M1802 119V129M1802 120V126M1802 117V125M1803 119V125M1804 113V127M1804 117V125M1805 115V122M1805 119V122M1807 115V121M1807 111V125M1808 108V116M1808 103V113M1809 112V120M1809 104V120M1809 108V114M1810 106V113M1811 100V109M1811 103V108M1812 100V108M1812 100V107M1813 103V106M1814 101V105M1815 96V105M1815 92V113M1817 133V159M1818 171V181M1819 153V169M1819 146V163M1819 143V158M1820 141V157M1820 138V155M1820 131V147M1821 127V141M1821 124V137M1821 117V131M1822 113V129M1822 110V127M1822 108V127M1823 107V119M1823 103V114M1823 97V111M1824 100V108M1824 95V104M1826 88V92M1826 77V95M1827 81V89M1828 81V89" stroke="#06E0A8" stroke-width="2" fill="none" shape-rendering="crispEdges"/>
<path d="M1487.5 367V370M1489.5 371V374M1490.5 373V376M1491.5 375V378M1492.5 374V377M1494.5 374V378M1495.5 372V375M1498.5 369V372M1498.5 367V371M1505.5 361V364M1506.5 361V363M1508.5 359V361M1508.5 359V361M1509.5 359V361M1511.5 359V361M1511.5 359V362M1511.5 360V362M1513.5 361V365M1515.5 364V367M1517.5 368V371M1517.5 368V372M1520.5 368V371M1521.5 366V369M1525.5 360V363M1526.5 359V362M1529.5 353V358M1530.5 353V357M1531.5 354V356M1534.5 357V362M1535.5 359V362M1537.5 356V360M1538.5 356V359M1542.5 350V354M1544.5 354V356M1545.5 355V357M1545.5 354V358M1546.5 353V357M1557.5 340V343M1557.5 337V343M1560.5 335V340M1560.5 335V339M1561.5 335V339M1563.5 334V337M1565.5 332V336M1566.5 329V337M1568.5 331V335M1569.5 332V334M1570.5 332V334M1571.5 331V333M1578.5 322V325M1588.5 316V322M1589.5 313V318M1590.5 315V317M1596.5 310V313M1598.5 307V310M1599.5 310V312M1599.5 309V312M1601.5 310V316M1601.5 311V315M1605.5 317V320M1611.5 312V316M1615.5 319V325M1617.5 314V319M1618.5 314V318M1619.5 313V316M1619.5 313V315M1620.5 310V312M1623.5 307V310M1624.5 307V311M1626.5 301V306M1630.5 305V310M1631.5 307V311M1637.5 295V298M1638.5 291V297M1645.5 289V291M1645.5 288V291M1649.5 286V290M1649.5 285V289M1653.5 279V285M1654.5 278V282M1655.5 270V279M1655.5 271V277M1658.5 263V270M1661.5 274V280M1662.5 275V284M1666.5 271V275M1668.5 267V269M1669.5 264V269M1674.5 263V270M1674.5 264V273M1677.5 281V290M1679.5 284V293M1683.5 269V274M1683.5 266V272M1685.5 264V270M1687.5 263V266M1689.5 264V268M1691.5 261V267M1691.5 263V267M1692.5 264V271M1698.5 254V260M1701.5 248V252M1706.5 268V299M1707.5 279V296M1709.5 258V265M1711.5 247V252M1714.5 238V244M1716.5 224V227M1716.5 227V230M1719.5 235V238M1719.5 235V238M1723.5 221V228M1723.5 217V222M1726.5 202V210M1728.5 197V206M1729.5 191V201M1731.5 185V190M1738.5 173V177M1746.5 153V157M1746.5 153V164M1749.5 170V178M1753.5 177V191M1754.5 196V210M1757.5 198V206M1759.5 180V195M1759.5 182V191M1761.5 195V209M1762.5 204V216M1763.5 219V224M1768.5 192V198M1770.5 200V212M1771.5 196V204M1775.5 183V189M1776.5 183V187M1777.5 175V188M1780.5 164V171M1782.5 178V185M1784.5 182V190M1786.5 197V199M1786.5 189V196M1791.5 154V164M1795.5 148V153M1798.5 143V150M1798.5 135V145M1799.5 129V151M1800.5 125V138M1806.5 112V119M1807.5 107V117M1812.5 102V107M1816.5 145V171M1816.5 157V178M1824.5 87V95M1826.5 82V91M1826.5 81V91" stroke="#FA0808" stroke-width="1" fill="none" shape-rendering="crispEdges"/>
</svg>
<div class="t" style="left:1872.00px;top:114.5px;color:#2E2E2E;transform:scaleX(0.9418);">6,000.00</div>
<div class="t" style="left:1872.00px;top:171px;color:#2E2E2E;transform:scaleX(0.9418);">5,000.00</div>
<div class="t" style="left:1872.00px;top:228px;color:#2E2E2E;transform:scaleX(0.9418);">4,000.00</div>
<div class="t" style="left:1872.00px;top:284.5px;color:#2E2E2E;transform:scaleX(0.9418);">3,000.00</div>
<div class="t" style="left:1872.00px;top:341px;color:#2E2E2E;transform:scaleX(0.9418);">2,000.00</div>
<svg class="a" style="left:1862px;top:75px" width="52" height="17"><path d="M0.7 8.1 L8.6 0.3 H51.8 V15.9 H8.6Z" fill="#FC0408"/></svg>
<div class="t" style="left:1872.20px;top:76.8px;font-weight:bold;color:#fff;transform:scaleX(1.0163);">6667.5</div>
<div class="t" style="left:1482.00px;top:392.5px;color:#2E2E2E;transform:scaleX(0.9446);">04 Jan 2010</div>
<div class="t" style="left:1623.00px;top:392.5px;color:#2E2E2E;transform:scaleX(0.9594);">04 Dec 2017</div>
<div class="t" style="left:1794.40px;top:392.5px;color:#2E2E2E;transform:scaleX(0.9697);">19 Nov 2025</div>
<div class="a" style="left:1481px;top:408px;width:436px;height:3px;background:#DCDCE2"></div>
<svg class="a" style="left:1481px;top:411px" width="436" height="90" viewBox="1481 411 436 90">
<rect x="1481" y="411" width="1" height="85.3" fill="#CFCFE0"/><rect x="1480.65" y="411" width="1.7" height="85.3" fill="#CFCFE0" fill-opacity="0.35"/>
<rect x="1490" y="411" width="1" height="82" fill="#E4E4EF"/>
<rect x="1499" y="411" width="1" height="82" fill="#E4E4EF"/>
<rect x="1507" y="411" width="1" height="82" fill="#E4E4EF"/>
<rect x="1516" y="411" width="1" height="82" fill="#E4E4EF"/>
<rect x="1525" y="411" width="1" height="85.3" fill="#CFCFE0"/><rect x="1524.65" y="411" width="1.7" height="85.3" fill="#CFCFE0" fill-opacity="0.35"/>
<rect x="1534" y="411" width="1" height="82" fill="#E4E4EF"/>
<rect x="1542" y="411" width="1" height="82" fill="#E4E4EF"/>
<rect x="1551" y="411" width="1" height="82" fill="#E4E4EF"/>
<rect x="1560" y="411" width="1" height="82" fill="#E4E4EF"/>
<rect x="1569" y="411" width="1" height="85.3" fill="#CFCFE0"/><rect x="1568.65" y="411" width="1.7" height="85.3" fill="#CFCFE0" fill-opacity="0.35"/>
<rect x="1577" y="411" width="1" height="82" fill="#E4E4EF"/>
<rect x="1586" y="411" width="1" height="82" fill="#E4E4EF"/>
<rect x="1595" y="411" width="1" height="82" fill="#E4E4EF"/>
<rect x="1604" y="411" width="1" height="82" fill="#E4E4EF"/>
<rect x="1612" y="411" width="1" height="85.3" fill="#CFCFE0"/><rect x="1611.65" y="411" width="1.7" height="85.3" fill="#CFCFE0" fill-opacity="0.35"/>
<rect x="1621" y="411" width="1" height="82" fill="#E4E4EF"/>
<rect x="1630" y="411" width="1" height="82" fill="#E4E4EF"/>
<rect x="1639" y="411" width="1" height="82" fill="#E4E4EF"/>
<rect x="1647" y="411" width="1" height="82" fill="#E4E4EF"/>
<rect x="1656" y="411" width="1" height="85.3" fill="#CFCFE0"/><rect x="1655.65" y="411" width="1.7" height="85.3" fill="#CFCFE0" fill-opacity="0.35"/>
<rect x="1665" y="411" width="1" height="82" fill="#E4E4EF"/>
<rect x="1674" y="411" width="1" height="82" fill="#E4E4EF"/>
<rect x="1683" y="411" width="1" height="82" fill="#E4E4EF"/>
<rect x="1691" y="411" width="1" height="82" fill="#E4E4EF"/>
<rect x="1700" y="411" width="1" height="85.3" fill="#CFCFE0"/><rect x="1699.65" y="411" width="1.7" height="85.3" fill="#CFCFE0" fill-opacity="0.35"/>
<rect x="1709" y="411" width="1" height="82" fill="#E4E4EF"/>
<rect x="1718" y="411" width="1" height="82" fill="#E4E4EF"/>
<rect x="1726" y="411" width="1" height="82" fill="#E4E4EF"/>
<rect x="1735" y="411" width="1" height="82" fill="#E4E4EF"/>
<rect x="1744" y="411" width="1" height="85.3" fill="#CFCFE0"/><rect x="1743.65" y="411" width="1.7" height="85.3" fill="#CFCFE0" fill-opacity="0.35"/>
<rect x="1753" y="411" width="1" height="82" fill="#E4E4EF"/>
<rect x="1761" y="411" width="1" height="82" fill="#E4E4EF"/>
<rect x="1770" y="411" width="1" height="82" fill="#E4E4EF"/>
<rect x="1779" y="411" width="1" height="82" fill="#E4E4EF"/>
<rect x="1788" y="411" width="1" height="85.3" fill="#CFCFE0"/><rect x="1787.65" y="411" width="1.7" height="85.3" fill="#CFCFE0" fill-opacity="0.35"/>
<rect x="1796" y="411" width="1" height="82" fill="#E4E4EF"/>
<rect x="1805" y="411" width="1" height="82" fill="#E4E4EF"/>
<rect x="1814" y="411" width="1" height="82" fill="#E4E4EF"/>
<rect x="1823" y="411" width="1" height="82" fill="#E4E4EF"/>
<rect x="1831" y="411" width="1" height="85.3" fill="#CFCFE0"/><rect x="1830.65" y="411" width="1.7" height="85.3" fill="#CFCFE0" fill-opacity="0.35"/>
<rect x="1840" y="411" width="1" height="82" fill="#E4E4EF"/>
<rect x="1849" y="411" width="1" height="82" fill="#E4E4EF"/>
<rect x="1858" y="411" width="1" height="82" fill="#E4E4EF"/>
<rect x="1481" y="489" width="387.7" height="1" fill="#DCDCE9"/>
<rect x="1481" y="479" width="387.7" height="1" fill="#DCDCE9"/>
<rect x="1481" y="468" width="387.7" height="1" fill="#DCDCE9"/>
<rect x="1481" y="458" width="387.7" height="1" fill="#DCDCE9"/>
<rect x="1481" y="448" width="387.7" height="1" fill="#DCDCE9"/>
<rect x="1481" y="438" width="387.7" height="1" fill="#DCDCE9"/>
<rect x="1481" y="427" width="387.7" height="1" fill="#DCDCE9"/>
<rect x="1481" y="417" width="387.7" height="1" fill="#DCDCE9"/>
<rect x="1481" y="411" width="1.4" height="80" fill="#C6C6DA"/>
<rect x="1482" y="462.7" width="1.08" height="27.3" fill="#06E0A8"/>
<rect x="1483" y="463.0" width="1.08" height="27.0" fill="#06E0A8"/>
<rect x="1484" y="455.0" width="1.08" height="35.0" fill="#06E0A8"/>
<rect x="1485" y="468.3" width="1.08" height="21.7" fill="#06E0A8"/>
<rect x="1486" y="471.0" width="1.08" height="19.0" fill="#06E0A8"/>
<rect x="1487" y="465.3" width="1.08" height="24.7" fill="#06E0A8"/>
<rect x="1488" y="430.0" width="1.08" height="60.0" fill="#06E0A8"/>
<rect x="1489" y="443.0" width="1.08" height="47.0" fill="#06E0A8"/>
<rect x="1490" y="464.4" width="1.08" height="25.6" fill="#06E0A8"/>
<rect x="1491" y="467.6" width="1.08" height="22.4" fill="#06E0A8"/>
<rect x="1492" y="464.5" width="1.08" height="25.5" fill="#06E0A8"/>
<rect x="1493" y="461.9" width="1.08" height="28.1" fill="#06E0A8"/>
<rect x="1494" y="468.8" width="1.08" height="21.2" fill="#06E0A8"/>
<rect x="1495" y="465.6" width="1.08" height="24.4" fill="#06E0A8"/>
<rect x="1496" y="459.7" width="1.08" height="30.3" fill="#06E0A8"/>
<rect x="1497" y="467.9" width="1.08" height="22.1" fill="#06E0A8"/>
<rect x="1498" y="466.4" width="1.08" height="23.6" fill="#06E0A8"/>
<rect x="1499" y="440.0" width="1.08" height="50.0" fill="#06E0A8"/>
<rect x="1500" y="464.9" width="1.08" height="25.1" fill="#06E0A8"/>
<rect x="1501" y="467.5" width="1.08" height="22.5" fill="#06E0A8"/>
<rect x="1502" y="471.0" width="1.08" height="19.0" fill="#FA0808"/>
<rect x="1503" y="461.8" width="1.08" height="28.2" fill="#06E0A8"/>
<rect x="1504" y="461.9" width="1.08" height="28.1" fill="#06E0A8"/>
<rect x="1505" y="460.3" width="1.08" height="29.7" fill="#06E0A8"/>
<rect x="1506" y="442.0" width="1.08" height="48.0" fill="#06E0A8"/>
<rect x="1507" y="463.6" width="1.08" height="26.4" fill="#06E0A8"/>
<rect x="1508" y="464.2" width="1.08" height="25.8" fill="#06E0A8"/>
<rect x="1509" y="466.2" width="1.08" height="23.8" fill="#06E0A8"/>
<rect x="1510" y="448.0" width="1.08" height="42.0" fill="#06E0A8"/>
<rect x="1511" y="460.3" width="1.08" height="29.7" fill="#06E0A8"/>
<rect x="1512" y="465.1" width="1.08" height="24.9" fill="#06E0A8"/>
<rect x="1513" y="464.5" width="1.08" height="25.5" fill="#06E0A8"/>
<rect x="1514" y="462.5" width="1.08" height="27.5" fill="#06E0A8"/>
<rect x="1516" y="424.0" width="1.08" height="66.0" fill="#06E0A8"/>
<rect x="1517" y="460.3" width="1.08" height="29.7" fill="#06E0A8"/>
<rect x="1518" y="466.5" width="1.08" height="23.5" fill="#06E0A8"/>
<rect x="1519" y="439.0" width="1.08" height="51.0" fill="#06E0A8"/>
<rect x="1520" y="461.4" width="1.08" height="28.6" fill="#06E0A8"/>
<rect x="1521" y="450.0" width="1.08" height="40.0" fill="#06E0A8"/>
<rect x="1522" y="459.0" width="1.08" height="31.0" fill="#06E0A8"/>
<rect x="1523" y="467.1" width="1.08" height="22.9" fill="#06E0A8"/>
<rect x="1524" y="466.4" width="1.08" height="23.6" fill="#06E0A8"/>
<rect x="1525" y="458.9" width="1.08" height="31.1" fill="#06E0A8"/>
<rect x="1526" y="462.2" width="1.08" height="27.8" fill="#06E0A8"/>
<rect x="1527" y="464.0" width="1.08" height="26.0" fill="#06E0A8"/>
<rect x="1528" y="464.5" width="1.08" height="25.5" fill="#06E0A8"/>
<rect x="1529" y="467.0" width="1.08" height="23.0" fill="#FA0808"/>
<rect x="1530" y="463.7" width="1.08" height="26.3" fill="#06E0A8"/>
<rect x="1531" y="469.3" width="1.08" height="20.7" fill="#06E0A8"/>
<rect x="1532" y="464.1" width="1.08" height="25.9" fill="#06E0A8"/>
<rect x="1533" y="466.1" width="1.08" height="23.9" fill="#06E0A8"/>
<rect x="1534" y="470.3" width="1.08" height="19.7" fill="#06E0A8"/>
<rect x="1535" y="455.0" width="1.08" height="35.0" fill="#06E0A8"/>
<rect x="1536" y="466.2" width="1.08" height="23.8" fill="#06E0A8"/>
<rect x="1537" y="464.9" width="1.08" height="25.1" fill="#06E0A8"/>
<rect x="1538" y="465.5" width="1.08" height="24.5" fill="#06E0A8"/>
<rect x="1539" y="467.8" width="1.08" height="22.2" fill="#06E0A8"/>
<rect x="1540" y="469.6" width="1.08" height="20.4" fill="#06E0A8"/>
<rect x="1541" y="464.4" width="1.08" height="25.6" fill="#06E0A8"/>
<rect x="1542" y="465.5" width="1.08" height="24.5" fill="#06E0A8"/>
<rect x="1543" y="465.6" width="1.08" height="24.4" fill="#06E0A8"/>
<rect x="1544" y="455.0" width="1.08" height="35.0" fill="#06E0A8"/>
<rect x="1545" y="470.7" width="1.08" height="19.3" fill="#06E0A8"/>
<rect x="1546" y="466.9" width="1.08" height="23.1" fill="#06E0A8"/>
<rect x="1547" y="464.1" width="1.08" height="25.9" fill="#06E0A8"/>
<rect x="1548" y="464.5" width="1.08" height="25.5" fill="#06E0A8"/>
<rect x="1549" y="469.2" width="1.08" height="20.8" fill="#06E0A8"/>
<rect x="1550" y="462.3" width="1.08" height="27.7" fill="#06E0A8"/>
<rect x="1551" y="467.4" width="1.08" height="22.6" fill="#06E0A8"/>
<rect x="1553" y="460.2" width="1.08" height="29.8" fill="#06E0A8"/>
<rect x="1554" y="461.7" width="1.08" height="28.3" fill="#06E0A8"/>
<rect x="1555" y="460.1" width="1.08" height="29.9" fill="#06E0A8"/>
<rect x="1556" y="467.2" width="1.08" height="22.8" fill="#06E0A8"/>
<rect x="1557" y="451.0" width="1.08" height="39.0" fill="#06E0A8"/>
<rect x="1558" y="460.9" width="1.08" height="29.1" fill="#06E0A8"/>
<rect x="1560" y="458.8" width="1.08" height="31.2" fill="#06E0A8"/>
<rect x="1561" y="460.6" width="1.08" height="29.4" fill="#06E0A8"/>
<rect x="1562" y="465.1" width="1.08" height="24.9" fill="#06E0A8"/>
<rect x="1563" y="464.8" width="1.08" height="25.2" fill="#06E0A8"/>
<rect x="1564" y="466.5" width="1.08" height="23.5" fill="#06E0A8"/>
<rect x="1565" y="466.8" width="1.08" height="23.2" fill="#06E0A8"/>
<rect x="1566" y="462.7" width="1.08" height="27.3" fill="#06E0A8"/>
<rect x="1567" y="466.3" width="1.08" height="23.7" fill="#06E0A8"/>
<rect x="1568" y="458.0" width="1.08" height="32.0" fill="#06E0A8"/>
<rect x="1569" y="466.3" width="1.08" height="23.7" fill="#06E0A8"/>
<rect x="1570" y="461.4" width="1.08" height="28.6" fill="#06E0A8"/>
<rect x="1571" y="459.0" width="1.08" height="31.0" fill="#06E0A8"/>
<rect x="1572" y="464.7" width="1.08" height="25.3" fill="#06E0A8"/>
<rect x="1573" y="465.9" width="1.08" height="24.1" fill="#06E0A8"/>
<rect x="1574" y="461.3" width="1.08" height="28.7" fill="#06E0A8"/>
<rect x="1575" y="458.5" width="1.08" height="31.5" fill="#06E0A8"/>
<rect x="1576" y="466.5" width="1.08" height="23.5" fill="#06E0A8"/>
<rect x="1577" y="465.5" width="1.08" height="24.5" fill="#06E0A8"/>
<rect x="1578" y="464.2" width="1.08" height="25.8" fill="#06E0A8"/>
<rect x="1579" y="468.2" width="1.08" height="21.8" fill="#06E0A8"/>
<rect x="1580" y="459.1" width="1.08" height="30.9" fill="#06E0A8"/>
<rect x="1581" y="459.6" width="1.08" height="30.4" fill="#06E0A8"/>
<rect x="1582" y="460.5" width="1.08" height="29.5" fill="#06E0A8"/>
<rect x="1583" y="459.8" width="1.08" height="30.2" fill="#06E0A8"/>
<rect x="1584" y="466.9" width="1.08" height="23.1" fill="#06E0A8"/>
<rect x="1585" y="466.4" width="1.08" height="23.6" fill="#06E0A8"/>
<rect x="1586" y="440.0" width="1.08" height="50.0" fill="#06E0A8"/>
<rect x="1587" y="462.3" width="1.08" height="27.7" fill="#06E0A8"/>
<rect x="1588" y="462.8" width="1.08" height="27.2" fill="#06E0A8"/>
<rect x="1589" y="467.3" width="1.08" height="22.7" fill="#06E0A8"/>
<rect x="1590" y="468.1" width="1.08" height="21.9" fill="#06E0A8"/>
<rect x="1591" y="454.0" width="1.08" height="36.0" fill="#06E0A8"/>
<rect x="1592" y="465.4" width="1.08" height="24.6" fill="#06E0A8"/>
<rect x="1593" y="471.7" width="1.08" height="18.3" fill="#06E0A8"/>
<rect x="1594" y="466.4" width="1.08" height="23.6" fill="#06E0A8"/>
<rect x="1595" y="466.1" width="1.08" height="23.9" fill="#06E0A8"/>
<rect x="1596" y="464.8" width="1.08" height="25.2" fill="#06E0A8"/>
<rect x="1597" y="464.6" width="1.08" height="25.4" fill="#06E0A8"/>
<rect x="1598" y="462.0" width="1.08" height="28.0" fill="#06E0A8"/>
<rect x="1599" y="472.2" width="1.08" height="17.8" fill="#06E0A8"/>
<rect x="1600" y="469.3" width="1.08" height="20.7" fill="#06E0A8"/>
<rect x="1601" y="463.9" width="1.08" height="26.1" fill="#06E0A8"/>
<rect x="1602" y="468.0" width="1.08" height="22.0" fill="#FA0808"/>
<rect x="1603" y="463.7" width="1.08" height="26.3" fill="#06E0A8"/>
<rect x="1605" y="434.0" width="1.08" height="56.0" fill="#06E0A8"/>
<rect x="1606" y="464.9" width="1.08" height="25.1" fill="#06E0A8"/>
<rect x="1607" y="468.5" width="1.08" height="21.5" fill="#06E0A8"/>
<rect x="1608" y="470.0" width="1.08" height="20.0" fill="#FA0808"/>
<rect x="1609" y="461.2" width="1.08" height="28.8" fill="#06E0A8"/>
<rect x="1610" y="465.7" width="1.08" height="24.3" fill="#06E0A8"/>
<rect x="1611" y="466.9" width="1.08" height="23.1" fill="#06E0A8"/>
<rect x="1612" y="460.2" width="1.08" height="29.8" fill="#06E0A8"/>
<rect x="1613" y="464.0" width="1.08" height="26.0" fill="#06E0A8"/>
<rect x="1614" y="449.0" width="1.08" height="41.0" fill="#06E0A8"/>
<rect x="1615" y="464.8" width="1.08" height="25.2" fill="#06E0A8"/>
<rect x="1616" y="463.3" width="1.08" height="26.7" fill="#06E0A8"/>
<rect x="1617" y="467.4" width="1.08" height="22.6" fill="#06E0A8"/>
<rect x="1618" y="464.4" width="1.08" height="25.6" fill="#06E0A8"/>
<rect x="1619" y="461.5" width="1.08" height="28.5" fill="#06E0A8"/>
<rect x="1620" y="462.0" width="1.08" height="28.0" fill="#06E0A8"/>
<rect x="1621" y="467.3" width="1.08" height="22.7" fill="#06E0A8"/>
<rect x="1622" y="466.3" width="1.08" height="23.7" fill="#06E0A8"/>
<rect x="1623" y="466.8" width="1.08" height="23.2" fill="#06E0A8"/>
<rect x="1624" y="444.0" width="1.08" height="46.0" fill="#06E0A8"/>
<rect x="1625" y="459.0" width="1.08" height="31.0" fill="#06E0A8"/>
<rect x="1626" y="459.3" width="1.08" height="30.7" fill="#06E0A8"/>
<rect x="1627" y="461.4" width="1.08" height="28.6" fill="#06E0A8"/>
<rect x="1628" y="464.5" width="1.08" height="25.5" fill="#06E0A8"/>
<rect x="1629" y="450.0" width="1.08" height="40.0" fill="#06E0A8"/>
<rect x="1630" y="465.9" width="1.08" height="24.1" fill="#06E0A8"/>
<rect x="1631" y="465.9" width="1.08" height="24.1" fill="#06E0A8"/>
<rect x="1632" y="434.0" width="1.08" height="56.0" fill="#06E0A8"/>
<rect x="1633" y="458.4" width="1.08" height="31.6" fill="#06E0A8"/>
<rect x="1634" y="466.6" width="1.08" height="23.4" fill="#06E0A8"/>
<rect x="1635" y="463.0" width="1.08" height="27.0" fill="#06E0A8"/>
<rect x="1636" y="465.8" width="1.08" height="24.2" fill="#06E0A8"/>
<rect x="1637" y="465.0" width="1.08" height="25.0" fill="#06E0A8"/>
<rect x="1638" y="466.9" width="1.08" height="23.1" fill="#06E0A8"/>
<rect x="1639" y="464.0" width="1.08" height="26.0" fill="#06E0A8"/>
<rect x="1640" y="469.8" width="1.08" height="20.2" fill="#06E0A8"/>
<rect x="1641" y="470.0" width="1.08" height="20.0" fill="#06E0A8"/>
<rect x="1642" y="470.1" width="1.08" height="19.9" fill="#06E0A8"/>
<rect x="1643" y="467.2" width="1.08" height="22.8" fill="#06E0A8"/>
<rect x="1644" y="464.5" width="1.08" height="25.5" fill="#06E0A8"/>
<rect x="1645" y="465.3" width="1.08" height="24.7" fill="#06E0A8"/>
<rect x="1646" y="464.5" width="1.08" height="25.5" fill="#06E0A8"/>
<rect x="1647" y="471.0" width="1.08" height="19.0" fill="#06E0A8"/>
<rect x="1648" y="470.1" width="1.08" height="19.9" fill="#06E0A8"/>
<rect x="1649" y="470.2" width="1.08" height="19.8" fill="#06E0A8"/>
<rect x="1650" y="470.7" width="1.08" height="19.3" fill="#06E0A8"/>
<rect x="1651" y="472.5" width="1.08" height="17.5" fill="#06E0A8"/>
<rect x="1652" y="469.6" width="1.08" height="20.4" fill="#06E0A8"/>
<rect x="1653" y="465.9" width="1.08" height="24.1" fill="#06E0A8"/>
<rect x="1654" y="470.4" width="1.08" height="19.6" fill="#06E0A8"/>
<rect x="1655" y="465.4" width="1.08" height="24.6" fill="#06E0A8"/>
<rect x="1656" y="474.0" width="1.08" height="16.0" fill="#FA0808"/>
<rect x="1657" y="468.8" width="1.08" height="21.2" fill="#06E0A8"/>
<rect x="1658" y="464.2" width="1.08" height="25.8" fill="#06E0A8"/>
<rect x="1659" y="439.0" width="1.08" height="51.0" fill="#06E0A8"/>
<rect x="1660" y="467.2" width="1.08" height="22.8" fill="#06E0A8"/>
<rect x="1661" y="464.9" width="1.08" height="25.1" fill="#06E0A8"/>
<rect x="1662" y="471.2" width="1.08" height="18.8" fill="#06E0A8"/>
<rect x="1663" y="460.0" width="1.08" height="30.0" fill="#06E0A8"/>
<rect x="1664" y="469.0" width="1.08" height="21.0" fill="#FA0808"/>
<rect x="1665" y="470.6" width="1.08" height="19.4" fill="#06E0A8"/>
<rect x="1666" y="468.6" width="1.08" height="21.4" fill="#06E0A8"/>
<rect x="1667" y="462.2" width="1.08" height="27.8" fill="#06E0A8"/>
<rect x="1668" y="468.1" width="1.08" height="21.9" fill="#06E0A8"/>
<rect x="1669" y="465.9" width="1.08" height="24.1" fill="#06E0A8"/>
<rect x="1670" y="469.0" width="1.08" height="21.0" fill="#06E0A8"/>
<rect x="1671" y="476.0" width="1.08" height="14.0" fill="#FA0808"/>
<rect x="1672" y="465.3" width="1.08" height="24.7" fill="#06E0A8"/>
<rect x="1673" y="463.5" width="1.08" height="26.5" fill="#06E0A8"/>
<rect x="1674" y="447.0" width="1.08" height="43.0" fill="#06E0A8"/>
<rect x="1675" y="459.6" width="1.08" height="30.4" fill="#06E0A8"/>
<rect x="1676" y="466.3" width="1.08" height="23.7" fill="#06E0A8"/>
<rect x="1678" y="459.3" width="1.08" height="30.7" fill="#06E0A8"/>
<rect x="1679" y="451.0" width="1.08" height="39.0" fill="#06E0A8"/>
<rect x="1680" y="459.2" width="1.08" height="30.8" fill="#06E0A8"/>
<rect x="1681" y="466.8" width="1.08" height="23.2" fill="#06E0A8"/>
<rect x="1682" y="462.5" width="1.08" height="27.5" fill="#06E0A8"/>
<rect x="1683" y="465.3" width="1.08" height="24.7" fill="#06E0A8"/>
<rect x="1684" y="473.0" width="1.08" height="17.0" fill="#FA0808"/>
<rect x="1685" y="460.7" width="1.08" height="29.3" fill="#06E0A8"/>
<rect x="1686" y="465.6" width="1.08" height="24.4" fill="#06E0A8"/>
<rect x="1687" y="464.9" width="1.08" height="25.1" fill="#06E0A8"/>
<rect x="1688" y="459.5" width="1.08" height="30.5" fill="#06E0A8"/>
<rect x="1689" y="463.7" width="1.08" height="26.3" fill="#06E0A8"/>
<rect x="1690" y="466.2" width="1.08" height="23.8" fill="#06E0A8"/>
<rect x="1691" y="461.3" width="1.08" height="28.7" fill="#06E0A8"/>
<rect x="1692" y="466.0" width="1.08" height="24.0" fill="#06E0A8"/>
<rect x="1693" y="457.0" width="1.08" height="33.0" fill="#06E0A8"/>
<rect x="1694" y="463.7" width="1.08" height="26.3" fill="#06E0A8"/>
<rect x="1695" y="469.4" width="1.08" height="20.6" fill="#06E0A8"/>
<rect x="1696" y="470.0" width="1.08" height="20.0" fill="#06E0A8"/>
<rect x="1698" y="471.1" width="1.08" height="18.9" fill="#06E0A8"/>
<rect x="1699" y="465.6" width="1.08" height="24.4" fill="#06E0A8"/>
<rect x="1700" y="452.0" width="1.08" height="38.0" fill="#06E0A8"/>
<rect x="1701" y="470.0" width="1.08" height="20.0" fill="#06E0A8"/>
<rect x="1702" y="469.7" width="1.08" height="20.3" fill="#06E0A8"/>
<rect x="1703" y="466.9" width="1.08" height="23.1" fill="#06E0A8"/>
<rect x="1704" y="471.2" width="1.08" height="18.8" fill="#06E0A8"/>
<rect x="1705" y="429.0" width="1.08" height="61.0" fill="#FA0808"/>
<rect x="1706" y="466.9" width="1.08" height="23.1" fill="#06E0A8"/>
<rect x="1707" y="472.6" width="1.08" height="17.4" fill="#06E0A8"/>
<rect x="1708" y="467.9" width="1.08" height="22.1" fill="#06E0A8"/>
<rect x="1709" y="464.4" width="1.08" height="25.6" fill="#06E0A8"/>
<rect x="1710" y="470.8" width="1.08" height="19.2" fill="#06E0A8"/>
<rect x="1711" y="464.7" width="1.08" height="25.3" fill="#06E0A8"/>
<rect x="1712" y="450.0" width="1.08" height="40.0" fill="#06E0A8"/>
<rect x="1713" y="463.7" width="1.08" height="26.3" fill="#06E0A8"/>
<rect x="1714" y="473.0" width="1.08" height="17.0" fill="#06E0A8"/>
<rect x="1715" y="468.4" width="1.08" height="21.6" fill="#06E0A8"/>
<rect x="1716" y="470.3" width="1.08" height="19.7" fill="#06E0A8"/>
<rect x="1717" y="464.0" width="1.08" height="26.0" fill="#06E0A8"/>
<rect x="1718" y="447.0" width="1.08" height="43.0" fill="#06E0A8"/>
<rect x="1719" y="466.1" width="1.08" height="23.9" fill="#06E0A8"/>
<rect x="1720" y="464.6" width="1.08" height="25.4" fill="#06E0A8"/>
<rect x="1721" y="470.0" width="1.08" height="20.0" fill="#FA0808"/>
<rect x="1722" y="469.8" width="1.08" height="20.2" fill="#06E0A8"/>
<rect x="1723" y="461.7" width="1.08" height="28.3" fill="#06E0A8"/>
<rect x="1724" y="465.9" width="1.08" height="24.1" fill="#06E0A8"/>
<rect x="1725" y="461.7" width="1.08" height="28.3" fill="#06E0A8"/>
<rect x="1726" y="469.1" width="1.08" height="20.9" fill="#06E0A8"/>
<rect x="1727" y="466.0" width="1.08" height="24.0" fill="#FA0808"/>
<rect x="1728" y="469.0" width="1.08" height="21.0" fill="#06E0A8"/>
<rect x="1729" y="460.1" width="1.08" height="29.9" fill="#06E0A8"/>
<rect x="1730" y="464.2" width="1.08" height="25.8" fill="#06E0A8"/>
<rect x="1731" y="469.0" width="1.08" height="21.0" fill="#FA0808"/>
<rect x="1732" y="463.9" width="1.08" height="26.1" fill="#06E0A8"/>
<rect x="1733" y="466.2" width="1.08" height="23.8" fill="#06E0A8"/>
<rect x="1735" y="466.0" width="1.08" height="24.0" fill="#06E0A8"/>
<rect x="1736" y="462.1" width="1.08" height="27.9" fill="#06E0A8"/>
<rect x="1737" y="467.9" width="1.08" height="22.1" fill="#06E0A8"/>
<rect x="1738" y="460.4" width="1.08" height="29.6" fill="#06E0A8"/>
<rect x="1739" y="459.9" width="1.08" height="30.1" fill="#06E0A8"/>
<rect x="1740" y="466.7" width="1.08" height="23.3" fill="#06E0A8"/>
<rect x="1741" y="459.8" width="1.08" height="30.2" fill="#06E0A8"/>
<rect x="1742" y="460.6" width="1.08" height="29.4" fill="#06E0A8"/>
<rect x="1743" y="463.8" width="1.08" height="26.2" fill="#06E0A8"/>
<rect x="1744" y="462.3" width="1.08" height="27.7" fill="#06E0A8"/>
<rect x="1745" y="455.0" width="1.08" height="35.0" fill="#06E0A8"/>
<rect x="1746" y="468.6" width="1.08" height="21.4" fill="#06E0A8"/>
<rect x="1747" y="464.3" width="1.08" height="25.7" fill="#06E0A8"/>
<rect x="1748" y="467.6" width="1.08" height="22.4" fill="#06E0A8"/>
<rect x="1749" y="462.5" width="1.08" height="27.5" fill="#06E0A8"/>
<rect x="1750" y="469.4" width="1.08" height="20.6" fill="#06E0A8"/>
<rect x="1751" y="462.8" width="1.08" height="27.2" fill="#06E0A8"/>
<rect x="1752" y="448.0" width="1.08" height="42.0" fill="#06E0A8"/>
<rect x="1753" y="467.3" width="1.08" height="22.7" fill="#06E0A8"/>
<rect x="1754" y="471.1" width="1.08" height="18.9" fill="#06E0A8"/>
<rect x="1755" y="469.4" width="1.08" height="20.6" fill="#06E0A8"/>
<rect x="1756" y="468.3" width="1.08" height="21.7" fill="#06E0A8"/>
<rect x="1757" y="467.6" width="1.08" height="22.4" fill="#06E0A8"/>
<rect x="1758" y="471.1" width="1.08" height="18.9" fill="#06E0A8"/>
<rect x="1759" y="467.2" width="1.08" height="22.8" fill="#06E0A8"/>
<rect x="1760" y="450.0" width="1.08" height="40.0" fill="#06E0A8"/>
<rect x="1761" y="472.3" width="1.08" height="17.7" fill="#06E0A8"/>
<rect x="1762" y="471.4" width="1.08" height="18.6" fill="#06E0A8"/>
<rect x="1763" y="470.3" width="1.08" height="19.7" fill="#06E0A8"/>
<rect x="1764" y="471.0" width="1.08" height="19.0" fill="#06E0A8"/>
<rect x="1765" y="466.0" width="1.08" height="24.0" fill="#06E0A8"/>
<rect x="1766" y="468.4" width="1.08" height="21.6" fill="#06E0A8"/>
<rect x="1767" y="472.0" width="1.08" height="18.0" fill="#06E0A8"/>
<rect x="1768" y="468.0" width="1.08" height="22.0" fill="#FA0808"/>
<rect x="1769" y="473.4" width="1.08" height="16.6" fill="#06E0A8"/>
<rect x="1770" y="472.9" width="1.08" height="17.1" fill="#06E0A8"/>
<rect x="1771" y="465.2" width="1.08" height="24.8" fill="#06E0A8"/>
<rect x="1772" y="467.0" width="1.08" height="23.0" fill="#FA0808"/>
<rect x="1773" y="470.2" width="1.08" height="19.8" fill="#06E0A8"/>
<rect x="1774" y="468.7" width="1.08" height="21.3" fill="#06E0A8"/>
<rect x="1775" y="467.0" width="1.08" height="23.0" fill="#06E0A8"/>
<rect x="1776" y="464.4" width="1.08" height="25.6" fill="#06E0A8"/>
<rect x="1777" y="463.9" width="1.08" height="26.1" fill="#06E0A8"/>
<rect x="1778" y="452.0" width="1.08" height="38.0" fill="#06E0A8"/>
<rect x="1779" y="466.9" width="1.08" height="23.1" fill="#06E0A8"/>
<rect x="1780" y="464.4" width="1.08" height="25.6" fill="#06E0A8"/>
<rect x="1781" y="465.1" width="1.08" height="24.9" fill="#06E0A8"/>
<rect x="1782" y="466.7" width="1.08" height="23.3" fill="#06E0A8"/>
<rect x="1783" y="468.6" width="1.08" height="21.4" fill="#06E0A8"/>
<rect x="1784" y="466.6" width="1.08" height="23.4" fill="#06E0A8"/>
<rect x="1785" y="462.0" width="1.08" height="28.0" fill="#06E0A8"/>
<rect x="1786" y="469.0" width="1.08" height="21.0" fill="#06E0A8"/>
<rect x="1787" y="463.6" width="1.08" height="26.4" fill="#06E0A8"/>
<rect x="1788" y="469.4" width="1.08" height="20.6" fill="#06E0A8"/>
<rect x="1789" y="469.4" width="1.08" height="20.6" fill="#06E0A8"/>
<rect x="1790" y="460.8" width="1.08" height="29.2" fill="#06E0A8"/>
<rect x="1791" y="465.1" width="1.08" height="24.9" fill="#06E0A8"/>
<rect x="1792" y="468.8" width="1.08" height="21.2" fill="#06E0A8"/>
<rect x="1793" y="462.9" width="1.08" height="27.1" fill="#06E0A8"/>
<rect x="1794" y="464.5" width="1.08" height="25.5" fill="#06E0A8"/>
<rect x="1795" y="462.2" width="1.08" height="27.8" fill="#06E0A8"/>
<rect x="1796" y="455.0" width="1.08" height="35.0" fill="#06E0A8"/>
<rect x="1797" y="461.1" width="1.08" height="28.9" fill="#06E0A8"/>
<rect x="1798" y="460.4" width="1.08" height="29.6" fill="#06E0A8"/>
<rect x="1799" y="462.1" width="1.08" height="27.9" fill="#06E0A8"/>
<rect x="1800" y="465.7" width="1.08" height="24.3" fill="#06E0A8"/>
<rect x="1801" y="465.2" width="1.08" height="24.8" fill="#06E0A8"/>
<rect x="1802" y="469.2" width="1.08" height="20.8" fill="#06E0A8"/>
<rect x="1803" y="466.8" width="1.08" height="23.2" fill="#06E0A8"/>
<rect x="1804" y="463.8" width="1.08" height="26.2" fill="#06E0A8"/>
<rect x="1805" y="469.9" width="1.08" height="20.1" fill="#06E0A8"/>
<rect x="1806" y="448.0" width="1.08" height="42.0" fill="#06E0A8"/>
<rect x="1807" y="466.3" width="1.08" height="23.7" fill="#06E0A8"/>
<rect x="1808" y="469.8" width="1.08" height="20.2" fill="#06E0A8"/>
<rect x="1809" y="468.2" width="1.08" height="21.8" fill="#06E0A8"/>
<rect x="1810" y="446.0" width="1.08" height="44.0" fill="#06E0A8"/>
<rect x="1811" y="468.1" width="1.08" height="21.9" fill="#06E0A8"/>
<rect x="1812" y="465.3" width="1.08" height="24.7" fill="#06E0A8"/>
<rect x="1813" y="472.3" width="1.08" height="17.7" fill="#06E0A8"/>
<rect x="1814" y="465.3" width="1.08" height="24.7" fill="#06E0A8"/>
<rect x="1816" y="473.1" width="1.08" height="16.9" fill="#06E0A8"/>
<rect x="1817" y="464.2" width="1.08" height="25.8" fill="#06E0A8"/>
<rect x="1818" y="463.8" width="1.08" height="26.2" fill="#06E0A8"/>
<rect x="1819" y="469.4" width="1.08" height="20.6" fill="#06E0A8"/>
<rect x="1820" y="466.1" width="1.08" height="23.9" fill="#06E0A8"/>
<rect x="1821" y="469.2" width="1.08" height="20.8" fill="#06E0A8"/>
<rect x="1822" y="453.0" width="1.08" height="37.0" fill="#06E0A8"/>
<rect x="1823" y="472.6" width="1.08" height="17.4" fill="#06E0A8"/>
<rect x="1824" y="471.0" width="1.08" height="19.0" fill="#06E0A8"/>
<rect x="1825" y="471.1" width="1.08" height="18.9" fill="#06E0A8"/>
<rect x="1826" y="458.0" width="1.08" height="32.0" fill="#06E0A8"/>
<rect x="1827" y="474.0" width="1.08" height="16.0" fill="#06E0A8"/>
</svg>
<div class="t" style="left:1491.00px;top:415px;transform:scaleX(0.9947);">Volume - 1.51M</div>
<div class="a" style="left:1823.5px;top:413.4px;width:23px;height:15px;background:#FAFAFB;border:1px solid #C8C8DC;border-radius:2.5px"></div>
<svg class="a" style="left:1824px;top:414px" width="22" height="14"><path d="M6.8 3 L15.2 11 M15.2 3 L6.8 11" stroke="#1E1E1E" stroke-width="1.8"/></svg>
<div class="t" style="left:1871.70px;top:442px;transform:scaleX(1.0557);">4M</div>
<div class="t" style="left:1872.4px;top:475px">0</div>
<svg class="a" style="left:1841px;top:465px" width="49" height="16"><path d="M0.3 8 L7.8 0.2 H48.9 V15.7 H7.8Z" fill="#06E0A8"/></svg>
<div class="t" style="left:1851.70px;top:466px;font-weight:bold;color:#fff;transform:scaleX(1.0432);">1.51M</div>
<div class="t" style="left:1482.00px;top:501.5px;color:#2E2E2E;transform:scaleX(0.9446);">04 Jan 2010</div>
<div class="t" style="left:1623.00px;top:501.5px;color:#2E2E2E;transform:scaleX(0.9594);">04 Dec 2017</div>
<div class="t" style="left:1794.40px;top:501.5px;color:#2E2E2E;transform:scaleX(0.9697);">19 Nov 2025</div>
<div class="a" style="left:1480px;top:522px;width:438px;height:120px;background:#EEEEF2;border:1px solid #CCCEDB"></div>
<div class="a" style="left:1481px;top:523px;width:436px;height:22px;background:#F5F5F7"></div>
<div class="t" style="left:1486.30px;top:528px;color:#8C8C8C;transform:scaleX(0.9799);">Strategy Details</div>
<svg class="a" style="left:1575px;top:531px" width="302" height="5"><rect width="302" height="5" fill="url(#dg)"/></svg>
<svg class="a" style="left:1880px;top:525px" width="36" height="18" viewBox="0 0 36 18">
<path d="M7 3.5 H12 M7.5 3 V9.5 M6 9.5 H13 M9.5 10 V14" stroke="#1E1E1E" stroke-width="1" fill="none"/><rect x="10" y="3" width="2" height="6.5" fill="#1E1E1E"/>
<path d="M21.5 5.1 L30.5 13.2 M30.5 5.1 L21.5 13.2" stroke="#1E1E1E" stroke-width="1.5" fill="none"/></svg>
<div class="t" style="left:1488.80px;top:560.2px;font-size:16px;font-weight:bold;transform:scaleX(0.8437);line-height:18px;height:18px;">BSK</div>
<div class="t" style="left:1629.40px;top:550px;font-size:11px;color:#555;transform:scaleX(0.9343);">Live P&amp;L:</div>
<div class="t" style="left:1679.20px;top:550.3px;font-size:12.6px;font-weight:bold;color:#06E0A8;transform:scaleX(0.9586);">0.00</div>
<div class="t" style="left:1629.40px;top:570px;font-size:11px;color:#555;transform:scaleX(0.9810);">Live position:</div>
<div class="t" style="left:1699.40px;top:570.5px;font-size:12.4px;font-weight:bold;transform:scaleX(0.9617);">0.00</div>
<div class="a" style="left:1485px;top:594px;width:140px;height:40px;background:#D5E3F3"></div>
<div class="t" style="left:1531.50px;top:599px;font-size:11px;color:#666;">Total P&amp;L</div>
<div class="t" style="left:1522.50px;top:614.5px;font-weight:bold;transform:scaleX(1.0251);">4575458.50</div>
<div class="a" style="left:1629px;top:594px;width:140px;height:40px;background:#D5E3F3"></div>
<div class="t" style="left:1683.50px;top:599px;font-size:11px;color:#666;transform:scaleX(0.9164);">Trades</div>
<div class="t" style="left:1688.50px;top:614.5px;font-weight:bold;transform:scaleX(1.0484);">286</div>
<div class="a" style="left:1773px;top:594px;width:140px;height:40px;background:#D5E3F3"></div>
<div class="t" style="left:1827.50px;top:599px;font-size:11px;color:#666;transform:scaleX(0.9754);">Win %</div>
<div class="t" style="left:1828.00px;top:614.5px;font-weight:bold;">0.269</div>
<div class="a" style="left:252px;top:29px;width:204px;height:98px;background:#F6F6F8;border:1px solid #CCCEDB;box-shadow:4px 4px 5px rgba(0,0,0,0.42)"></div>
<div class="a" style="left:254px;top:30.5px;width:200.3px;height:21.5px;background:#C9DEF5"></div>
<div class="t" style="left:287.30px;top:34.5px;transform:scaleX(0.9869);">Python Dev Environment</div>
<div class="t" style="left:287.30px;top:57.5px;">Python Console Interpreter</div>
<div class="t" style="left:287.30px;top:82.5px;transform:scaleX(0.9461);">Settings...</div>
<div class="t" style="left:287.30px;top:107.5px;transform:scaleX(0.9442);">Proxy Settings...</div>
<div class="t" style="left:422.00px;top:82.5px;transform:scaleX(0.8705);">F8</div>
<div class="a" style="left:285px;top:76px;width:169px;height:1px;background:#CCCEDB"></div>
<div class="a" style="left:285px;top:101px;width:169px;height:1px;background:#CCCEDB"></div>
</body></html>
